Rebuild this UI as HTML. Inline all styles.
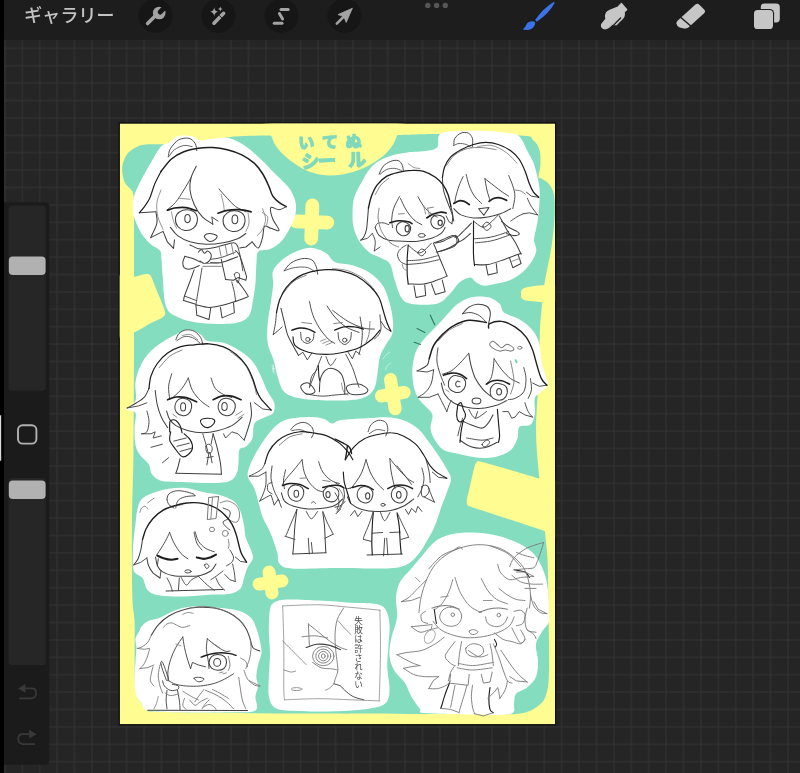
<!DOCTYPE html>
<html lang="ja">
<head>
<meta charset="utf-8">
<title>Procreate</title>
<style>
html,body{margin:0;padding:0;background:#252525;}
body{width:800px;height:773px;overflow:hidden;position:relative;font-family:"Liberation Sans","Noto Sans CJK JP",sans-serif;}
#stage{position:absolute;left:0;top:0;width:800px;height:773px;display:block;will-change:transform;}
#gallery{position:absolute;left:24px;top:3.4px;font-weight:500;will-change:transform;opacity:.999;font-size:18.3px;line-height:26px;color:#c4c4c4;letter-spacing:-0.2px;white-space:nowrap;}
</style>
</head>
<body>
<svg id="stage" width="800" height="773" viewBox="0 0 800 773">
  <defs>
    <pattern id="grid" x="4.9" y="13.5" width="17.4" height="17.4" patternUnits="userSpaceOnUse">
      <rect x="0" y="0" width="17.4" height="17.4" fill="#252525"/>
      <rect x="-0.6" y="0" width="1.2" height="17.4" fill="#313131"/>
      <rect x="16.8" y="0" width="1.2" height="17.4" fill="#313131"/>
      <rect x="0" y="-0.6" width="17.4" height="1.2" fill="#313131"/>
      <rect x="0" y="16.8" width="17.4" height="1.2" fill="#313131"/>
    </pattern>
    <filter id="soft" x="-5%" y="-5%" width="110%" height="110%"><feGaussianBlur stdDeviation="0.45"/></filter>
  </defs>
  <rect x="0" y="0" width="800" height="773" fill="url(#grid)"/>
  <!-- canvas shadow -->
  <rect x="118.6" y="122.4" width="437.6" height="603" fill="#0c0c0c"/>
<clipPath id="cv"><rect x="119.7" y="123.4" width="435.4" height="600.9"/></clipPath>
<g id="art" clip-path="url(#cv)">
<rect x="119.7" y="123.4" width="435.4" height="600.9" fill="#fffc92"/>
<path d="M143.5,144.7C148.3,144.0 155.2,144.4 163.0,144.2C170.8,144.0 181.3,144.2 190.0,143.5C198.7,142.8 207.5,141.2 215.0,140.0C222.5,138.8 226.2,137.2 235.0,136.5C243.8,135.8 257.2,135.7 268.0,135.5C278.8,135.3 279.0,135.6 300.0,135.5C321.0,135.4 370.7,135.2 394.0,135.0C417.3,134.8 418.8,133.9 440.0,134.0C461.2,134.1 505.5,134.5 521.0,135.5C536.5,136.5 529.9,137.6 533.0,140.0C536.1,142.4 538.3,145.8 539.5,150.0C540.7,154.2 540.5,160.6 540.4,165.0C540.2,169.4 538.4,174.2 538.6,176.5C538.8,178.8 539.8,177.2 541.5,178.5C543.2,179.8 547.0,181.4 549.0,184.0C551.0,186.6 552.8,189.3 553.8,194.0C554.8,198.7 554.8,206.0 554.7,212.0C554.7,218.0 554.1,223.7 553.5,230.0C552.9,236.3 552.1,243.3 551.0,250.0C549.9,256.7 548.2,263.8 547.0,270.0C545.8,276.2 544.9,280.3 544.0,287.0C543.1,293.7 542.2,302.8 541.5,310.0C540.8,317.2 540.5,318.3 540.0,330.0C539.5,341.7 539.2,363.3 538.5,380.0C537.8,396.7 536.0,415.0 536.0,430.0C536.0,445.0 537.5,458.3 538.5,470.0C539.5,481.7 540.9,489.7 542.0,500.0C543.1,510.3 544.1,522.0 545.0,532.0C545.9,542.0 546.9,547.0 547.5,560.0C548.1,573.0 548.2,591.3 548.5,610.0C548.8,628.7 549.4,657.8 549.0,672.0C548.6,686.2 547.8,689.3 546.0,695.0C544.2,700.7 542.3,702.9 538.0,706.0C533.7,709.1 529.7,712.2 520.0,713.5C510.3,714.8 516.7,714.0 480.0,714.0C443.3,714.0 353.3,713.8 300.0,713.5C246.7,713.2 185.3,712.8 160.0,712.0C134.7,711.2 151.5,711.0 148.0,709.0C144.5,707.0 141.2,704.0 139.0,700.0C136.8,696.0 135.7,693.3 135.0,685.0C134.3,676.7 134.7,660.8 134.6,650.0C134.5,639.2 134.9,629.2 134.5,620.0C134.1,610.8 132.7,611.7 132.3,595.0C131.9,578.3 131.8,544.2 132.0,520.0C132.2,495.8 133.2,478.3 133.5,450.0C133.8,421.7 133.9,378.3 134.0,350.0C134.1,321.7 134.0,302.5 134.0,280.0C134.0,257.5 134.1,229.2 134.0,215.0C133.9,200.8 134.0,199.2 133.5,195.0C133.0,190.8 132.4,191.8 131.0,189.7C129.6,187.6 126.2,185.4 124.8,182.5C123.3,179.6 122.6,175.1 122.3,172.0C122.0,168.9 122.0,166.7 122.8,163.8C123.6,160.9 125.0,157.1 126.9,154.5C128.8,151.9 131.4,149.9 134.2,148.3C137.0,146.7 138.7,145.4 143.5,144.7Z" fill="#85ddc0"/>
<path d="M266.0,123.5C244.2,125.6 269.8,132.5 271.3,136.0C272.8,139.5 273.1,141.4 275.0,144.4C276.9,147.4 279.4,150.7 282.5,153.8C285.6,156.9 289.4,160.1 293.8,163.1C298.2,166.1 303.5,169.6 308.8,171.6C314.1,173.6 320.0,174.8 325.6,175.3C331.2,175.8 336.9,175.3 342.5,174.4C348.1,173.5 354.1,171.7 359.4,169.7C364.7,167.7 370.0,164.8 374.4,162.2C378.8,159.5 382.5,156.8 385.6,153.8C388.7,150.8 391.2,147.4 393.1,144.4C395.0,141.4 395.4,139.5 396.9,136.0C398.4,132.5 423.8,125.6 402.0,123.5C380.2,121.4 287.8,121.4 266.0,123.5Z" fill="#fffc92"/>
<path d="M119.0,277.0C120.8,267.2 127.2,277.6 130.0,277.5C132.8,277.4 133.8,277.1 136.0,276.6C138.2,276.1 140.9,275.0 143.0,274.6C145.1,274.2 147.1,273.8 148.5,274.2C149.9,274.6 149.9,274.2 151.3,277.0C152.7,279.8 154.8,285.7 157.0,291.0C159.2,296.3 162.9,305.2 164.2,309.0C165.5,312.8 165.3,312.1 165.0,313.5C164.7,314.9 165.0,315.8 162.5,317.5C160.0,319.2 154.8,321.0 150.0,323.5C145.2,326.0 139.2,330.4 134.0,332.5C128.8,334.6 121.5,345.2 119.0,336.0C116.5,326.8 117.2,286.8 119.0,277.0Z" fill="#fffc92"/>
<path d="M476.5,462.6C477.4,461.6 475.6,460.9 479.5,461.6C483.4,462.3 490.1,464.2 500.0,467.0C509.9,469.8 529.7,475.9 539.2,478.6C548.7,481.3 554.0,473.6 557.0,483.0C560.0,492.4 559.1,527.0 557.0,535.0C554.9,543.0 552.1,533.5 544.3,530.9C536.5,528.3 522.2,523.6 510.0,519.6C497.8,515.6 478.1,509.3 471.0,506.8C463.9,504.3 468.1,505.5 467.4,504.4C466.7,503.3 466.5,503.1 466.9,500.0C467.3,496.9 468.8,491.4 470.0,486.0C471.2,480.6 473.2,471.4 474.3,467.5C475.4,463.6 475.6,463.6 476.5,462.6Z" fill="#fffc92"/>
<path d="M526.0,287.5C531.8,286.2 551.0,283.8 556.0,286.0C561.0,288.2 561.0,298.6 556.0,301.0C551.0,303.4 531.8,301.7 526.0,300.5C520.2,299.3 521.0,296.2 521.0,294.0C521.0,291.8 520.2,288.8 526.0,287.5Z" fill="#fffc92"/>
<g transform="rotate(2 311.8 222)" stroke="#fffc92" stroke-width="13.8" stroke-linecap="round" fill="none"><path d="M296.3,222.0 L327.3,222.0 M311.8,205.5 L311.8,238.5"/></g>
<g transform="rotate(-9 392.8 394.2)" stroke="#fffc92" stroke-width="13" stroke-linecap="round" fill="none"><path d="M381.3,394.2 L404.3,394.2 M392.8,379.4 L392.8,409.0"/></g>
<g transform="rotate(-8 270.5 582.5)" stroke="#fffc92" stroke-width="13" stroke-linecap="round" fill="none"><path d="M259.0,582.5 L282.0,582.5 M270.5,572.0 L270.5,593.0"/></g>
<path d="M161.0,146.6C164.1,143.2 166.5,144.1 169.3,142.4C172.1,140.7 173.8,137.2 177.6,136.2C181.4,135.2 188.2,135.5 192.0,136.2C195.8,136.9 196.9,139.9 200.4,140.3C203.9,140.7 208.0,139.0 212.8,138.7C217.6,138.4 223.9,137.0 229.4,138.3C234.9,139.6 240.4,142.8 245.9,146.6C251.4,150.4 257.7,156.5 262.5,161.0C267.3,165.5 271.4,170.0 274.9,173.5C278.4,177.0 280.9,179.2 283.5,182.0C286.1,184.8 288.5,186.7 290.5,190.0C292.5,193.3 294.7,198.1 295.5,202.0C296.3,205.9 296.3,209.3 295.5,213.5C294.7,217.7 292.8,222.5 290.5,227.0C288.2,231.5 285.4,236.8 282.0,240.5C278.6,244.2 274.2,247.2 270.3,249.0C266.4,250.8 260.8,249.3 258.5,251.5C256.2,253.7 257.0,256.6 256.5,262.0C256.0,267.4 256.0,277.2 255.4,283.8C254.8,290.4 253.8,296.1 252.8,301.3C251.8,306.6 251.6,311.8 249.3,315.3C247.0,318.8 244.1,320.9 238.8,322.3C233.6,323.8 225.1,324.0 217.8,324.0C210.5,324.0 201.7,323.5 195.0,322.3C188.3,321.1 182.3,319.6 177.5,317.0C172.7,314.4 168.5,313.5 166.0,306.5C163.5,299.5 163.4,283.1 162.6,275.0C161.8,266.9 161.8,262.1 161.4,258.0C161.0,253.9 161.7,252.8 160.0,250.5C158.3,248.2 153.9,247.0 151.0,244.5C148.1,242.0 145.0,238.6 142.8,235.5C140.6,232.4 139.1,229.2 137.6,226.0C136.1,222.8 134.6,218.9 133.8,216.0C133.1,213.1 133.1,212.0 133.1,208.7C133.1,205.4 132.9,200.7 134.1,196.2C135.3,191.7 137.5,187.2 140.3,181.7C143.1,176.2 147.2,168.9 150.7,163.1C154.1,157.2 157.9,150.0 161.0,146.6Z" fill="#ffffff"/>
<path d="M273.0,271.0C274.5,267.0 278.3,263.2 282.0,260.0C285.7,256.8 290.2,254.1 295.0,252.0C299.8,249.9 305.4,247.5 310.6,247.7C315.8,247.9 322.0,250.6 326.0,253.0C330.0,255.4 330.4,259.9 334.8,262.0C339.2,264.1 346.5,263.5 352.4,265.3C358.3,267.1 364.9,269.6 370.0,273.0C375.1,276.4 379.7,280.9 383.0,286.0C386.3,291.1 388.1,297.9 389.8,303.8C391.5,309.7 392.6,316.3 393.0,321.4C393.4,326.5 393.3,330.6 392.0,334.6C390.7,338.6 387.4,341.9 385.4,345.6C383.4,349.3 381.3,352.2 380.0,356.6C378.7,361.0 378.4,367.3 377.7,372.0C376.9,376.7 376.8,381.3 375.5,385.0C374.2,388.7 373.1,391.6 370.0,394.0C366.9,396.4 364.1,398.3 356.8,399.4C349.5,400.5 335.5,400.7 326.0,400.5C316.5,400.3 306.6,399.8 299.6,398.3C292.6,396.8 287.9,395.4 284.2,391.7C280.5,388.0 279.4,381.9 277.6,376.4C275.8,370.9 274.9,364.3 273.2,358.8C271.5,353.3 268.6,349.3 267.7,343.4C266.8,337.5 267.1,330.6 267.7,323.6C268.2,316.6 270.1,308.2 271.0,301.6C271.9,295.0 272.9,289.1 273.2,284.0C273.5,278.9 271.5,275.0 273.0,271.0Z" fill="#ffffff"/>
<path d="M354.3,197.0C355.9,191.8 359.8,185.5 362.3,180.9C364.8,176.3 366.6,172.7 369.4,169.4C372.2,166.1 375.1,163.4 379.0,161.0C382.9,158.6 387.9,156.6 392.7,155.2C397.5,153.8 401.9,153.1 407.6,152.4C413.3,151.7 422.0,151.7 427.0,150.8C432.0,149.9 434.9,149.9 437.4,146.9C439.9,143.9 435.5,135.7 441.9,133.0C448.2,130.3 465.0,130.8 475.5,130.7C486.0,130.6 497.8,131.6 505.0,132.5C512.2,133.4 515.3,133.2 519.0,136.2C522.7,139.2 524.9,146.2 527.3,150.7C529.7,155.2 531.8,158.5 533.5,163.0C535.2,167.5 536.6,172.8 537.6,177.6C538.6,182.4 539.5,186.1 539.7,192.0C539.9,197.9 539.2,207.0 538.7,212.8C538.2,218.6 537.3,222.5 536.5,227.0C535.7,231.5 534.0,236.1 534.0,240.0C534.0,243.9 536.8,246.9 536.3,250.7C535.8,254.4 533.4,258.8 531.0,262.5C528.6,266.2 525.7,269.7 522.0,272.7C518.3,275.7 513.7,278.6 509.0,280.5C504.3,282.4 497.9,283.4 493.6,284.3C489.3,285.2 486.0,286.0 483.0,285.6C480.0,285.2 477.7,283.1 475.5,281.7C473.3,280.3 472.7,277.4 470.0,277.5C467.3,277.6 462.8,279.8 459.4,282.5C456.0,285.2 453.5,290.4 449.7,294.0C445.9,297.6 443.2,302.2 436.7,303.8C430.2,305.4 416.8,304.9 410.9,303.8C405.0,302.7 403.9,301.3 401.2,297.3C398.5,293.3 396.6,285.6 394.7,280.0C392.8,274.4 392.3,267.7 390.0,264.0C387.7,260.3 384.4,259.9 381.0,258.0C377.6,256.1 373.0,255.3 369.4,252.5C365.8,249.7 361.8,245.2 359.1,241.0C356.5,236.8 354.6,231.8 353.5,227.0C352.4,222.2 352.5,217.0 352.6,212.0C352.7,207.0 352.7,202.2 354.3,197.0Z" fill="#ffffff"/>
<path d="M175.9,334.5C180.4,332.2 184.2,329.3 188.3,329.3C192.4,329.3 197.6,332.6 200.7,334.5C203.8,336.4 203.2,339.3 207.0,340.7C210.8,342.1 218.0,341.1 223.5,342.8C229.0,344.5 235.2,347.9 240.0,351.0C244.8,354.1 249.0,357.2 252.5,361.4C256.0,365.5 258.4,371.1 260.8,375.9C263.2,380.7 264.8,385.9 267.0,390.4C269.2,394.9 273.2,399.0 274.2,402.8C275.2,406.6 274.7,410.7 273.2,413.1C271.7,415.5 268.1,415.6 265.0,417.3C261.9,419.0 256.6,420.1 254.5,423.5C252.4,426.9 253.9,434.2 252.5,438.0C251.1,441.8 248.2,444.6 246.0,446.5C243.8,448.4 240.7,447.1 239.5,449.5C238.3,451.9 238.9,457.1 238.6,460.7C238.3,464.3 238.5,467.9 237.5,471.0C236.5,474.1 235.2,477.3 232.7,479.2C230.2,481.1 227.6,482.0 222.6,482.6C217.6,483.2 209.5,483.1 202.8,483.0C196.1,482.9 189.1,482.3 182.3,482.0C175.5,481.7 167.1,482.3 162.0,481.0C156.9,479.7 154.2,477.0 152.0,474.2C149.8,471.4 150.6,467.2 148.6,464.0C146.6,460.8 142.2,458.2 140.0,455.0C137.8,451.8 136.4,449.6 135.5,445.0C134.6,440.4 134.5,432.9 134.5,427.6C134.5,422.3 136.9,416.2 135.5,413.1C134.1,410.0 126.2,411.1 126.2,409.0C126.2,406.9 133.9,405.2 135.5,400.7C137.1,396.2 134.6,387.9 135.5,382.0C136.4,376.1 138.4,370.3 140.7,365.5C142.9,360.7 145.6,356.8 149.0,353.0C152.4,349.2 156.9,345.9 161.4,342.8C165.9,339.7 171.4,336.8 175.9,334.5Z" fill="#ffffff"/>
<path d="M287.6,419.3C293.4,417.7 303.9,417.1 310.0,417.0C316.1,416.9 320.3,417.9 324.0,419.0C327.7,420.1 329.2,423.3 332.0,423.5C334.8,423.7 335.3,420.9 341.0,420.0C346.7,419.1 358.4,418.8 366.0,418.3C373.6,417.8 380.5,416.9 386.7,417.2C392.9,417.5 398.1,418.4 403.3,420.3C408.5,422.2 413.7,425.2 417.8,428.6C421.9,432.1 424.7,436.5 428.1,441.0C431.6,445.5 435.4,450.8 438.5,455.5C441.6,460.2 444.6,465.1 446.7,469.0C448.8,472.9 450.9,475.0 451.0,478.8C451.1,482.6 448.6,487.5 447.0,492.0C445.4,496.5 443.2,501.5 441.7,505.7C440.2,509.9 439.4,513.0 438.0,517.0C436.6,521.0 435.0,525.8 433.0,530.0C431.0,534.2 428.5,538.3 426.0,542.5C423.5,546.7 421.2,551.2 417.8,555.0C414.4,558.8 410.6,563.0 405.4,565.2C400.2,567.4 397.6,567.9 386.7,568.4C375.8,568.9 355.8,568.0 340.0,568.0C324.2,568.0 301.8,569.2 291.7,568.4C281.6,567.6 281.7,565.8 279.3,563.2C276.9,560.6 278.7,557.6 277.3,552.8C275.9,548.0 273.4,540.1 271.0,534.2C268.6,528.3 264.9,522.8 262.8,517.6C260.7,512.4 260.0,507.8 258.6,503.0C257.2,498.2 256.2,492.8 254.5,488.7C252.8,484.6 249.3,481.4 248.3,478.3C247.3,475.2 247.3,473.8 248.3,470.0C249.3,466.2 251.8,460.7 254.5,455.5C257.2,450.3 261.4,443.8 264.8,439.0C268.2,434.2 271.4,429.9 275.2,426.6C279.0,423.3 281.8,420.9 287.6,419.3Z" fill="#ffffff"/>
<path d="M141.6,499.3C144.2,496.5 148.5,494.9 153.0,493.1C157.5,491.4 163.2,489.7 168.8,488.8C174.4,487.9 180.5,487.3 186.3,487.9C192.1,488.5 198.3,491.1 203.8,492.3C209.3,493.5 214.6,493.4 219.5,494.9C224.4,496.3 230.0,498.2 233.5,501.0C237.0,503.8 238.8,507.4 240.5,511.5C242.2,515.6 243.1,521.1 244.0,525.5C244.9,529.9 244.6,533.7 245.8,537.8C247.0,541.9 249.8,546.5 251.0,550.0C252.2,553.5 253.4,555.9 252.8,558.8C252.2,561.7 249.0,564.3 247.5,567.5C246.0,570.7 245.2,574.5 244.0,578.0C242.8,581.5 242.8,585.9 240.5,588.5C238.2,591.1 234.7,592.8 230.0,593.8C225.3,594.8 219.8,594.2 212.5,594.6C205.2,595.0 195.1,596.2 186.3,596.4C177.6,596.5 166.4,596.5 160.0,595.5C153.6,594.5 150.7,593.2 147.8,590.3C144.9,587.4 144.8,581.2 142.5,578.0C140.2,574.8 135.4,575.1 133.8,571.0C132.2,566.9 132.9,559.0 132.9,553.5C132.9,548.0 133.4,542.8 133.8,537.8C134.2,532.8 134.9,528.5 135.5,523.8C136.1,519.1 136.3,513.9 137.3,509.8C138.3,505.7 139.0,502.1 141.6,499.3Z" fill="#ffffff"/>
<path d="M141.6,626.5C143.1,624.8 144.7,622.8 147.8,621.3C150.9,619.8 155.9,619.4 160.0,617.8C164.1,616.2 167.9,613.4 172.3,611.6C176.7,609.9 181.1,608.2 186.3,607.3C191.6,606.4 198.0,606.3 203.8,606.4C209.6,606.5 215.5,607.4 221.3,608.1C227.1,608.8 233.9,609.2 238.8,610.8C243.8,612.4 248.1,614.9 251.0,617.8C253.9,620.7 254.8,624.5 256.3,628.3C257.8,632.1 258.9,636.4 259.8,640.5C260.7,644.6 261.8,648.7 261.5,652.8C261.2,656.9 258.9,660.9 258.0,665.0C257.1,669.1 256.3,673.8 256.3,677.3C256.3,680.8 258.1,682.8 258.0,686.0C257.9,689.2 255.8,692.4 255.4,696.5C255.0,700.6 259.6,707.9 255.4,710.5C251.2,713.1 243.0,712.0 230.0,712.3C217.0,712.6 191.2,712.6 177.5,712.3C163.8,712.0 153.8,712.0 147.8,710.5C141.8,709.0 143.7,706.4 141.6,703.5C139.5,700.6 136.7,697.7 135.5,693.0C134.3,688.3 134.6,680.8 134.6,675.5C134.6,670.2 135.2,666.2 135.5,661.5C135.8,656.8 136.4,651.3 136.4,647.5C136.4,643.7 135.1,641.4 135.5,638.8C135.9,636.2 138.0,633.8 139.0,631.8C140.0,629.8 140.1,628.2 141.6,626.5Z" fill="#ffffff"/>
<path d="M270.0,609.0C271.2,603.8 273.1,603.2 276.3,601.6C279.5,600.0 282.1,599.7 289.2,599.5C296.3,599.3 308.7,600.1 319.0,600.6C329.3,601.1 341.8,602.2 351.0,602.7C360.2,603.2 368.8,602.8 374.5,603.8C380.2,604.8 382.7,605.6 385.2,609.0C387.7,612.4 389.0,617.9 389.5,624.0C390.0,630.1 388.8,638.3 388.4,645.4C388.0,652.5 387.1,659.6 387.3,666.7C387.5,673.8 389.5,682.3 389.5,688.0C389.5,693.7 389.4,697.7 387.3,700.9C385.2,704.1 382.8,705.7 376.7,707.3C370.6,708.9 360.6,709.8 351.0,710.5C341.4,711.2 329.7,711.5 319.0,711.5C308.3,711.5 294.5,711.2 287.0,710.5C279.5,709.8 277.2,709.6 274.2,707.3C271.2,705.0 269.8,701.9 268.9,696.6C268.0,691.3 268.7,682.4 268.9,675.3C269.1,668.2 270.0,661.1 270.0,654.0C270.0,646.9 268.9,640.1 268.9,632.6C268.9,625.1 268.8,614.2 270.0,609.0Z" fill="#ffffff"/>
<path d="M396.0,597.0C396.5,591.1 397.5,586.7 400.0,582.0C402.5,577.3 407.3,573.3 411.0,569.0C414.7,564.7 418.0,560.6 422.0,556.0C426.0,551.4 430.2,545.1 435.0,541.5C439.8,537.9 444.4,536.0 450.6,534.5C456.9,533.0 465.2,532.4 472.5,532.5C479.8,532.6 487.8,533.7 494.4,535.0C501.0,536.3 506.7,538.4 512.0,540.5C517.3,542.6 521.8,544.6 526.0,547.5C530.2,550.4 533.8,553.4 537.0,558.0C540.2,562.6 543.2,569.5 545.0,575.0C546.8,580.5 547.3,584.8 548.0,591.0C548.7,597.2 548.8,606.8 549.0,612.0C549.2,617.2 550.1,618.8 549.0,622.0C547.9,625.2 544.7,627.3 542.5,631.0C540.3,634.7 536.8,639.0 536.0,644.0C535.2,649.0 538.0,655.5 538.0,661.0C538.0,666.5 537.8,672.6 536.0,677.0C534.2,681.4 530.3,684.7 527.0,687.5C523.7,690.3 518.2,691.4 516.0,694.0C513.8,696.6 515.0,699.7 514.0,703.0C513.0,706.3 517.3,712.1 510.0,714.0C502.7,715.9 484.3,714.7 470.0,714.5C455.7,714.3 432.3,713.9 424.0,713.0C415.7,712.1 422.2,711.8 420.0,709.0C417.8,706.2 413.5,700.3 411.0,696.0C408.5,691.7 407.8,687.3 405.0,683.0C402.2,678.7 396.6,674.7 394.0,670.0C391.4,665.3 389.8,660.5 389.4,655.0C389.0,649.5 390.3,643.2 391.6,637.0C392.9,630.8 396.3,624.2 397.0,617.5C397.7,610.8 395.5,602.9 396.0,597.0Z" fill="#ffffff"/>
<path d="M449.0,312.6C452.5,308.9 454.1,306.4 457.8,303.8C461.5,301.2 465.9,298.3 471.0,297.2C476.1,296.1 483.8,296.1 488.6,297.2C493.4,298.3 497.0,301.2 499.6,303.8C502.2,306.4 500.7,310.0 504.0,312.6C507.3,315.2 514.6,316.3 519.4,319.2C524.2,322.1 529.3,326.2 532.6,330.2C535.9,334.2 537.7,338.3 539.2,343.4C540.7,348.5 540.3,355.5 541.4,361.0C542.5,366.5 544.7,372.4 545.8,376.4C546.9,380.4 548.7,382.6 548.0,385.2C547.3,387.8 543.6,389.6 541.4,391.8C539.2,394.0 535.9,394.7 534.8,398.4C533.7,402.1 535.5,409.4 534.8,413.8C534.1,418.2 533.0,422.6 530.4,424.8C527.8,427.0 521.6,424.7 519.4,427.0C517.2,429.3 518.9,434.5 517.4,438.4C515.9,442.3 514.2,447.1 510.6,450.2C507.0,453.3 500.8,455.6 495.5,456.9C490.2,458.1 485.1,458.3 478.7,457.7C472.2,457.1 462.8,454.9 456.8,453.5C450.8,452.1 446.7,452.1 442.8,449.5C438.9,446.9 435.8,441.6 433.7,438.0C431.6,434.4 430.7,431.5 430.5,427.6C430.3,423.7 433.4,418.4 432.4,414.7C431.4,411.0 427.1,408.4 424.7,405.6C422.3,402.8 419.9,400.7 418.2,397.9C416.5,395.1 415.3,392.5 414.3,388.8C413.3,385.1 412.6,380.2 412.4,375.9C412.2,371.6 412.3,367.3 413.0,363.0C413.7,358.7 414.5,354.2 416.5,350.0C418.5,345.8 421.6,342.0 425.0,338.0C428.4,334.0 433.0,330.0 437.0,325.8C441.0,321.6 445.5,316.3 449.0,312.6Z" fill="#ffffff"/>
<g fill="none" stroke="#404040" stroke-width="0.92" stroke-linecap="round" stroke-linejoin="round"><path d="M168.3,156.9C168.6,155.5 168.6,151.5 170.4,148.6C172.1,145.8 175.5,141.7 178.6,139.9C181.7,138.2 186.2,137.7 189.0,138.3C191.8,138.9 193.9,141.4 195.2,143.5C196.5,145.5 196.4,149.5 196.7,150.7"/><path d="M212.8,224.2L211.8,216.9L218.0,221.1"/><path d="M191.1,177.6C189.9,179.7 186.4,185.9 183.8,190.0C181.2,194.2 178.3,199.2 175.5,202.4C172.8,205.7 168.6,208.5 167.3,209.7"/><path d="M219.0,189.0C220.4,190.5 224.5,195.4 227.3,198.3C230.0,201.2 232.5,204.3 235.6,206.6C238.7,208.8 244.2,210.9 245.9,211.8"/><path d="M237.6,245.9C238.2,248.0 239.9,254.2 240.7,258.3C241.6,262.5 242.5,268.7 242.8,270.8"/><path d="M184.5,296.0L195.9,300.4"/><path d="M202.0,268.0C201.6,270.6 200.3,278.5 199.4,283.8C198.5,289.0 197.3,296.0 196.8,299.5C196.2,303.0 196.0,303.9 195.9,304.8"/><path d="M231.8,282.0C232.2,283.8 233.7,289.3 234.4,292.5C235.0,295.7 235.4,299.8 235.6,301.3"/><path d="M234.4,274.1C234.7,273.3 236.1,272.2 237.0,272.4C237.9,272.5 239.5,273.3 239.6,275.0C239.8,276.8 238.6,282.4 237.9,282.9C237.1,283.3 235.8,279.1 235.3,277.6C234.7,276.2 234.1,275.0 234.4,274.1Z"/><path d="M210.8,259.3C212.5,259.0 217.2,258.7 221.3,257.5C225.3,256.3 232.9,253.1 235.3,252.3"/><path d="M379.1,174.3C379.8,173.0 381.0,168.7 383.0,166.5C384.9,164.3 388.2,162.2 390.8,161.3C393.3,160.3 396.6,160.0 398.5,160.7C400.5,161.4 401.6,163.7 402.4,165.5C403.2,167.3 403.2,170.4 403.4,171.3"/><path d="M360.7,240.2L367.5,238.3L372.3,233.4"/><path d="M372.3,233.4C372.8,234.7 374.9,238.3 375.2,241.2C375.6,244.1 374.4,249.3 374.3,250.9"/><path d="M374.3,250.9L380.1,247.0"/><path d="M399.5,196.6C398.5,198.5 395.0,204.3 393.7,208.2C392.4,212.1 391.9,216.6 391.7,219.9C391.6,223.1 392.5,226.3 392.7,227.6"/><path d="M400.5,198.5C401.4,200.5 404.0,206.6 406.3,210.2C408.5,213.7 411.5,217.4 414.0,219.9C416.6,222.3 420.5,223.9 421.8,224.7"/><path d="M417.9,196.6C418.9,198.2 421.5,203.4 423.7,206.3C426.0,209.2 429.2,212.3 431.5,214.0C433.8,215.8 436.4,216.5 437.3,217.0"/><path d="M451.9,223.7L449.0,221.8L446.1,216.0"/><path d="M375.2,227.6C375.6,227.0 375.9,224.6 377.2,223.7C378.5,222.9 381.0,222.6 383.0,222.8C384.9,222.9 387.8,224.4 388.8,224.7"/><ellipse cx="421.8" cy="235.4" rx="3.5" ry="1.9"/><path d="M408.2,245.1C410.2,246.4 416.0,253.2 419.9,252.9C423.7,252.5 429.6,244.8 431.5,243.1"/><path d="M417.9,252.9C417.9,251.7 420.5,249.1 421.8,249.0C423.1,248.8 425.7,250.8 425.7,251.9C425.7,253.0 423.1,255.6 421.8,255.8C420.5,255.9 417.9,254.0 417.9,252.9Z"/><path d="M406.3,245.1C405.3,245.7 401.9,247.4 400.5,249.0C399.0,250.6 397.5,252.7 397.5,254.8C397.5,256.9 399.0,260.0 400.5,261.6C401.9,263.2 405.3,264.0 406.3,264.5"/><path d="M407.2,260.6C409.7,260.5 416.8,260.5 421.8,259.6C426.8,258.8 434.7,256.4 437.3,255.8"/><path d="M407.2,264.5C410.0,264.2 418.4,263.8 423.7,262.9C429.1,262.1 436.7,260.2 439.3,259.6"/><path d="M453.8,145.5C454.0,144.3 453.6,140.3 454.8,138.3C456.0,136.2 458.8,134.0 461.0,133.1C463.3,132.2 466.4,132.2 468.3,133.1C470.2,134.0 471.7,136.0 472.4,138.3C473.1,140.5 472.4,145.2 472.4,146.6"/><path d="M538.7,197.3L531.4,196.2L526.3,192.1"/><path d="M527.3,198.3C528.0,199.7 529.7,203.8 531.4,206.6C533.2,209.3 536.6,213.5 537.6,214.9"/><path d="M537.6,214.9L529.4,212.8L523.1,213.8"/><path d="M523.1,213.8C522.1,214.4 519.0,215.7 516.9,216.9C514.9,218.1 511.8,220.4 510.7,221.1"/><path d="M508.7,175.5C509.3,177.3 511.8,182.4 512.8,185.9C513.8,189.3 514.9,192.4 514.9,196.2C514.9,200.0 513.1,206.6 512.8,208.7"/><path d="M466.2,174.5C466.7,176.4 467.9,182.3 469.3,185.9C470.7,189.5 472.4,193.3 474.5,196.2C476.6,199.2 480.5,202.3 481.7,203.5"/><path d="M484.9,178.6C485.2,180.5 486.1,186.4 486.9,190.0C487.8,193.7 489.5,198.7 490.0,200.4"/><path d="M484.9,178.6C486.4,179.9 491.2,183.6 494.2,185.9C497.1,188.1 500.0,190.4 502.4,192.1C504.9,193.8 507.6,195.5 508.7,196.2"/><path d="M463.1,176.6C462.4,178.1 460.2,182.6 459.0,185.9C457.8,189.2 456.6,193.5 455.9,196.2C455.2,199.0 455.0,201.4 454.8,202.4"/><path d="M473.5,221.1C475.0,222.1 480.0,226.9 482.8,227.3C485.5,227.6 487.4,225.2 490.0,223.1C492.6,221.1 496.9,216.2 498.3,214.9"/><path d="M482.8,226.3C482.8,224.9 485.5,222.1 486.9,222.1C488.3,222.1 491.1,224.9 491.1,226.3C491.1,227.6 488.3,230.4 486.9,230.4C485.5,230.4 482.8,227.6 482.8,226.3Z"/><path d="M474.5,238.7C476.7,238.5 483.6,238.3 488.0,237.6C492.3,236.9 496.9,235.6 500.4,234.5C503.8,233.5 507.3,231.9 508.7,231.4"/><path d="M475.5,242.8C478.3,242.5 486.2,242.1 492.1,240.7C498.0,239.4 507.6,235.6 510.7,234.5"/><path d="M284.2,270.8C285.3,269.5 287.9,265.1 290.8,263.1C293.7,261.1 298.3,259.2 301.8,258.7C305.3,258.1 309.3,258.5 311.7,259.8C314.1,261.1 315.1,264.0 316.1,266.4C317.1,268.8 317.4,272.8 317.6,274.1"/><path d="M390.9,331.3L385.4,328.0L381.0,321.4"/><path d="M379.9,314.8C380.0,317.0 381.1,324.7 381.0,328.0C380.8,331.3 379.9,332.7 378.8,334.6C377.7,336.4 375.1,338.2 374.4,339.0"/><path d="M276.5,312.6C276.3,314.4 275.9,319.9 275.4,323.6C274.8,327.2 273.6,332.7 273.2,334.6"/><path d="M273.2,334.6L278.7,330.2L282.0,326.9"/><path d="M309.5,301.6C310.0,303.8 311.1,310.4 312.8,314.8C314.4,319.2 316.8,323.9 319.4,328.0C321.9,332.0 325.6,336.4 328.2,339.0C330.7,341.5 333.7,342.6 334.8,343.4"/><path d="M327.1,306.0C328.4,307.8 331.7,313.5 334.8,317.0C337.9,320.5 341.7,324.3 345.8,326.9C349.8,329.4 356.8,331.5 359.0,332.4"/><path d="M332.6,310.4C335.1,312.2 342.8,318.4 348.0,321.4C353.1,324.3 359.0,326.7 363.4,328.0C367.8,329.3 372.5,328.9 374.4,329.1"/><path d="M360.1,317.0C360.4,319.5 362.1,327.6 362.3,332.4C362.4,337.1 361.7,341.9 361.2,345.6C360.6,349.2 359.3,352.9 359.0,354.4"/><path d="M300.7,332.4C300.9,333.7 300.7,338.2 301.8,340.1C302.9,341.9 305.5,343.4 307.3,343.4C309.1,343.4 311.7,341.7 312.8,340.1C313.9,338.4 313.7,334.6 313.9,333.5"/><ellipse cx="307.9" cy="339.4" rx="2.2" ry="2.0"/><path d="M338.1,332.4C338.3,333.7 338.1,338.0 339.2,340.1C340.3,342.1 342.8,344.5 344.7,344.5C346.5,344.5 349.1,342.1 350.2,340.1C351.3,338.0 351.1,333.7 351.3,332.4"/><ellipse cx="344.7" cy="340.1" rx="2.2" ry="2.0"/><path d="M298.5,355.5L302.9,352.2L307.3,359.9L311.7,353.3"/><path d="M348.0,352.2L352.4,358.8L355.7,351.1L360.1,354.4"/><path d="M321.6,356.6C320.8,358.4 318.6,363.9 317.2,367.6C315.7,371.2 314.1,375.3 312.8,378.6C311.5,381.9 310.0,385.9 309.5,387.3"/><path d="M326.0,356.6C326.7,358.0 328.7,365.0 330.4,365.4C332.0,365.7 335.0,359.9 335.9,358.8"/><path d="M345.8,354.4C346.9,356.6 350.5,363.2 352.4,367.6C354.2,372.0 355.7,377.5 356.8,380.8C357.9,384.1 358.6,386.3 359.0,387.3"/><path d="M309.5,387.3C309.8,385.5 310.4,379.3 311.7,376.4C313.0,373.4 316.3,370.9 317.2,369.8"/><path d="M306.2,393.9C308.8,394.3 316.8,396.0 321.6,396.1C326.3,396.3 330.4,395.4 334.8,395.0C339.2,394.7 345.8,394.1 348.0,393.9"/><path d="M175.9,339.7C176.4,338.6 177.3,335.1 179.0,333.5C180.7,331.8 183.7,330.3 186.2,329.9C188.8,329.6 192.1,330.1 194.5,331.4C196.9,332.7 199.3,335.4 200.7,337.6C202.1,339.8 202.5,343.6 202.8,344.8"/><path d="M271.1,410.0L262.8,409.0L254.5,402.8"/><path d="M244.2,440.1L238.0,433.8L231.8,431.8L225.6,438.0L223.5,433.8"/><path d="M127.2,408.0L138.6,405.9L146.9,402.8"/><path d="M146.9,411.1C147.3,412.8 149.0,418.0 149.0,421.4C149.0,424.9 148.1,429.7 146.9,431.8C145.7,433.8 142.6,433.5 141.7,433.8"/><path d="M141.7,433.8L151.0,433.8L155.2,431.8L153.1,438.0L161.4,435.9"/><path d="M188.3,378.0C187.3,379.7 184.5,385.2 182.1,388.3C179.7,391.4 176.2,394.7 173.8,396.6C171.4,398.5 168.6,399.2 167.6,399.7"/><path d="M188.3,378.0C189.0,380.0 190.4,386.6 192.4,390.4C194.5,394.2 198.0,398.0 200.7,400.7C203.5,403.5 207.6,405.9 209.0,406.9"/><path d="M211.1,378.0C211.8,379.7 213.1,385.5 215.2,388.3C217.3,391.1 220.7,393.0 223.5,394.5C226.3,396.1 230.4,397.1 231.8,397.6"/><path d="M171.7,373.8C171.2,375.9 169.0,382.1 168.6,386.2C168.3,390.4 169.5,396.6 169.7,398.7"/><path d="M173.8,441.1L186.2,438.0"/><path d="M176.9,446.3L189.3,443.2"/><path d="M180.0,451.4L191.4,448.3"/><path d="M202.8,433.8C203.3,435.6 205.0,441.1 205.9,444.2C206.8,447.3 207.6,451.1 208.0,452.5"/><path d="M213.1,433.8L211.1,444.2"/><path d="M205.9,446.3C206.2,444.9 208.0,444.0 209.0,444.2C210.0,444.4 211.8,445.9 212.1,447.3C212.5,448.7 211.9,451.6 211.1,452.5C210.2,453.3 207.8,453.5 206.9,452.5C206.1,451.4 205.6,447.6 205.9,446.3Z"/><path d="M209.0,452.5L206.9,464.9"/><path d="M210.0,452.5L212.1,462.8"/><path d="M206.9,457.7L213.1,456.6"/><path d="M151.0,447.3L162.4,444.2"/><path d="M162.4,462.8L168.6,457.7"/><path d="M290.7,429.7C291.6,428.8 293.6,425.7 295.9,424.5C298.1,423.3 301.6,422.1 304.2,422.4C306.8,422.8 309.9,424.8 311.4,426.6C313.0,428.3 313.5,430.9 313.5,432.8C313.5,434.7 311.8,437.1 311.4,437.9"/><path d="M264.8,463.8C264.1,464.9 263.3,468.0 260.7,470.0C258.1,472.1 251.2,475.2 249.3,476.2"/><path d="M249.3,476.2L258.6,476.2L265.9,472.1"/><path d="M265.9,472.1C265.9,474.2 266.4,480.7 265.9,484.5C265.4,488.3 263.8,492.1 262.8,494.9C261.7,497.6 260.2,500.0 259.7,501.1"/><path d="M259.7,501.1L266.9,496.9L271.0,494.9L273.1,501.1L274.2,505.2L278.3,499.0L281.4,507.3"/><path d="M272.1,465.9C271.9,468.0 270.7,474.2 271.0,478.3C271.4,482.4 272.8,486.9 274.2,490.7C275.5,494.5 278.5,499.4 279.3,501.1"/><path d="M272.1,482.4C271.4,482.8 268.6,483.1 267.9,484.5C267.3,485.9 267.3,489.2 267.9,490.7C268.6,492.3 271.4,493.3 272.1,493.8"/><path d="M302.1,459.7C300.7,461.4 296.4,466.9 293.8,470.0C291.2,473.1 288.5,475.9 286.6,478.3C284.7,480.7 283.1,483.5 282.4,484.5"/><path d="M302.1,459.7C302.4,461.7 303.0,468.3 304.2,472.1C305.4,475.9 307.3,479.5 309.3,482.4C311.4,485.4 314.3,488.1 316.6,489.7C318.8,491.2 321.8,491.4 322.8,491.8"/><path d="M318.7,461.7C319.3,463.5 320.7,469.0 322.8,472.1C324.9,475.2 328.3,478.5 331.1,480.4C333.8,482.3 338.0,483.0 339.4,483.5"/><path d="M285.5,470.0C285.2,471.8 283.6,477.3 283.5,480.4C283.3,483.5 284.3,487.3 284.5,488.7"/><path d="M311.4,503.1C311.8,502.9 312.8,501.6 313.5,501.7C314.2,501.8 315.2,503.3 315.6,503.6"/><path d="M343.5,488.7C343.7,490.0 344.9,494.2 344.5,496.9C344.2,499.7 342.6,502.8 341.4,505.2C340.2,507.6 338.0,510.4 337.3,511.4"/><path d="M336.3,513.5L340.4,509.4"/><path d="M306.2,511.4C307.1,512.6 309.5,518.7 311.4,518.7C313.3,518.7 316.6,512.6 317.6,511.4"/><path d="M296.9,509.4C296.1,511.4 293.5,517.6 291.7,521.8C290.0,525.9 287.7,531.8 286.6,534.2C285.5,536.6 285.4,535.9 285.1,536.3"/><path d="M285.1,536.3L294.9,539.4"/><path d="M322.8,511.4C323.5,513.2 325.4,518.3 326.9,521.8C328.5,525.2 331.1,530.1 332.1,532.1C333.1,534.2 333.0,533.9 333.1,534.2"/><path d="M333.1,534.2L324.9,538.3"/><path d="M308.3,538.3L309.3,553.9"/><path d="M311.4,542.5L312.4,552.8"/><path d="M368.1,431.7C368.6,430.5 369.5,426.4 371.2,424.5C372.9,422.6 376.1,420.7 378.5,420.3C380.9,420.0 384.2,420.9 385.7,422.4C387.3,424.0 387.8,427.4 387.8,429.7C387.8,431.9 386.1,434.8 385.7,435.9"/><path d="M446.8,478.3L438.5,477.3L432.3,472.1"/><path d="M426.1,459.7C426.6,461.7 428.5,468.3 429.2,472.1C429.9,475.9 430.0,480.7 430.2,482.4"/><path d="M428.1,486.6C428.7,488.0 430.2,492.3 431.3,494.9C432.3,497.5 433.8,500.9 434.4,502.1"/><path d="M434.4,502.1L428.1,499.0L424.0,496.9"/><path d="M421.9,486.6C422.8,484.9 425.9,484.9 427.1,485.6C428.3,486.2 429.4,489.0 429.2,490.7C429.0,492.5 427.3,495.0 426.1,495.9C424.9,496.8 422.6,497.5 421.9,495.9C421.2,494.4 421.1,488.3 421.9,486.6Z"/><path d="M366.0,459.7C366.7,461.7 368.5,468.3 370.2,472.1C371.9,475.9 374.2,479.5 376.4,482.4C378.6,485.4 382.4,488.5 383.6,489.7"/><path d="M366.0,459.7C365.4,461.7 363.6,468.3 361.9,472.1C360.2,475.9 357.6,479.7 355.7,482.4C353.8,485.2 351.4,487.6 350.5,488.7"/><path d="M389.9,458.6C390.0,460.5 390.4,466.4 390.9,470.0C391.4,473.7 392.3,477.3 393.0,480.4C393.6,483.5 394.7,487.3 395.0,488.7"/><path d="M389.9,458.6C391.4,460.5 396.2,466.8 399.2,470.0C402.1,473.3 405.0,476.2 407.4,478.3C409.9,480.4 412.6,481.8 413.7,482.4"/><path d="M397.1,465.9C398.5,467.6 403.0,473.1 405.4,476.2C407.8,479.3 410.6,483.1 411.6,484.5"/><path d="M421.9,468.0C422.3,469.7 424.0,474.9 424.0,478.3C424.0,481.8 423.0,485.6 421.9,488.7C420.9,491.8 418.5,495.6 417.8,496.9"/><ellipse cx="383.0" cy="504.8" rx="2.1" ry="1.4"/><path d="M350.5,515.6L354.7,510.4L357.8,516.6L361.9,511.4"/><path d="M405.4,509.4L408.5,514.5L411.6,508.3L415.7,512.5L417.8,506.3L421.9,511.4"/><path d="M335.0,482.4C336.0,483.1 339.1,485.6 341.2,486.6C343.3,487.6 345.3,488.7 347.4,488.7C349.5,488.7 352.6,486.9 353.6,486.6"/><path d="M335.0,492.8C335.7,494.2 338.8,498.3 339.1,501.1C339.5,503.8 337.4,508.0 337.1,509.4"/><path d="M335.0,507.3C336.0,506.9 339.5,506.3 341.2,505.2C342.9,504.2 344.7,501.8 345.3,501.1"/><path d="M380.5,512.5C381.2,513.8 383.1,520.7 384.7,520.7C386.2,520.7 389.0,513.8 389.9,512.5"/><path d="M373.3,511.4C372.6,513.5 370.7,519.7 369.2,523.8C367.6,528.0 364.9,533.7 364.0,536.3C363.0,538.9 363.6,538.9 363.6,539.4"/><path d="M363.6,539.4L371.2,541.4"/><path d="M397.1,512.5C398.0,514.4 400.5,520.2 402.3,523.8C404.0,527.5 406.4,532.0 407.4,534.2C408.5,536.4 408.3,536.8 408.5,537.3"/><path d="M408.5,537.3L401.2,539.4"/><path d="M372.3,533.2L382.6,532.5"/><path d="M389.9,532.5L400.2,532.1"/><path d="M384.7,538.3L383.6,555.9"/><path d="M386.7,538.3L387.8,554.9"/><path d="M167.0,499.3C167.3,498.4 167.3,495.4 168.8,494.0C170.2,492.6 173.1,491.3 175.8,490.9C178.4,490.4 181.6,490.9 184.5,491.4C187.4,491.9 191.5,493.3 193.3,494.0C195.0,494.7 194.7,495.5 195.0,495.8"/><path d="M195.0,495.8C193.5,495.9 188.9,496.0 186.3,496.6C183.6,497.2 180.9,498.1 179.3,499.3C177.6,500.4 177.2,502.2 176.6,503.6C176.0,505.1 175.9,507.3 175.8,508.0"/><path d="M167.0,499.3C167.3,500.1 167.6,503.0 168.8,504.5C169.9,506.0 173.1,507.4 174.0,508.0"/><path d="M246.6,562.3L240.5,561.4L235.3,557.0"/><path d="M230.0,550.0C230.6,551.2 233.2,555.0 233.5,557.0C233.8,559.0 232.9,560.8 231.8,562.3C230.6,563.7 227.4,565.2 226.5,565.8"/><path d="M232.6,564.0C232.9,565.5 233.9,569.8 234.4,572.8C234.8,575.7 235.1,580.0 235.3,581.5"/><path d="M235.3,581.5L230.0,579.8L224.8,574.5"/><path d="M223.0,571.0C221.8,571.9 218.0,574.8 216.0,576.3C214.0,577.7 211.6,579.2 210.8,579.8"/><path d="M133.8,564.9L140.8,562.3L146.9,557.9"/><path d="M160.0,578.0L160.9,571.0"/><path d="M169.6,532.5C168.9,534.0 166.9,538.3 165.3,541.3C163.6,544.2 161.5,547.7 160.0,550.0C158.5,552.3 157.1,554.4 156.5,555.3"/><path d="M169.6,532.5C170.4,534.3 172.1,539.5 174.0,543.0C175.9,546.5 178.7,550.9 181.0,553.5C183.3,556.1 186.8,557.9 188.0,558.8"/><path d="M195.0,531.6C195.6,533.2 196.8,538.5 198.5,541.3C200.3,544.0 202.9,546.5 205.5,548.3C208.1,550.0 212.8,551.2 214.3,551.8"/><path d="M194.1,532.5C194.6,534.3 195.4,540.1 196.8,543.0C198.1,545.9 201.1,548.8 202.0,550.0"/><path d="M158.3,558.8L157.4,565.8"/><path d="M204.6,564.9C204.8,564.2 206.5,563.7 207.3,564.0C208.0,564.3 209.2,565.9 209.0,566.6C208.9,567.4 207.1,568.7 206.4,568.4C205.6,568.1 204.5,565.6 204.6,564.9Z"/><ellipse cx="188.0" cy="571.4" rx="3.2" ry="1.6"/><path d="M223.0,508.0C224.2,508.6 229.1,509.8 230.0,511.5C230.9,513.3 229.4,516.8 228.3,518.5C227.1,520.3 223.3,520.5 223.0,522.0C222.7,523.5 225.3,525.9 226.5,527.3C227.7,528.6 229.4,529.4 230.0,529.9"/><path d="M167.0,578.0C167.6,579.2 169.6,582.8 170.5,585.0C171.4,587.2 172.0,590.1 172.3,591.1"/><path d="M181.0,577.1C181.9,578.4 184.5,584.6 186.3,585.0C188.0,585.4 189.5,581.2 191.5,579.8C193.5,578.3 197.3,576.8 198.5,576.3"/><path d="M179.3,578.0L178.4,590.3"/><path d="M198.5,576.3C200.0,577.7 204.6,582.7 207.3,585.0C209.9,587.3 213.1,589.4 214.3,590.3"/><path d="M216.0,578.0C216.6,579.2 218.0,583.0 219.5,585.0C221.0,587.0 223.9,589.4 224.8,590.3"/><path d="M182.8,637.0C181.6,638.8 177.8,643.7 175.8,647.5C173.7,651.3 171.8,655.7 170.5,659.8C169.2,663.8 168.2,668.5 167.9,672.0C167.6,675.5 168.6,679.3 168.8,680.8"/><path d="M182.8,637.0C183.0,638.8 183.8,644.0 184.5,647.5C185.2,651.0 186.1,654.5 187.1,658.0C188.1,661.5 190.0,666.8 190.6,668.5"/><path d="M190.6,668.5L192.4,662.4L198.5,665.0L205.5,666.8"/><path d="M207.3,638.8C207.1,640.5 206.2,645.8 206.4,649.3C206.5,652.8 207.7,656.5 208.1,659.8C208.6,663.0 208.9,667.0 209.0,668.5"/><path d="M207.3,638.8C208.7,639.9 213.1,643.7 216.0,645.8C218.9,647.8 222.4,650.1 224.8,651.0C227.1,651.9 229.1,651.0 230.0,651.0"/><path d="M194.1,678.1C194.3,677.4 196.9,677.2 198.5,677.3C200.1,677.3 203.2,678.0 203.8,678.7C204.3,679.3 203.0,680.6 202.0,681.1C201.0,681.6 198.9,682.1 197.6,681.6C196.3,681.1 194.0,678.9 194.1,678.1Z"/><path d="M168.8,680.8C169.9,681.3 172.8,683.4 175.8,684.3C178.7,685.1 182.2,685.7 186.3,686.0C190.3,686.3 195.6,686.4 200.3,686.0C204.9,685.6 210.2,684.5 214.3,683.4C218.3,682.2 221.5,680.6 224.8,679.0C228.0,677.4 232.0,674.6 233.5,673.8"/><path d="M160.9,664.1C160.4,661.6 161.5,660.2 162.6,662.4C163.8,664.6 167.1,674.2 167.9,677.3C168.6,680.3 167.4,680.8 167.0,680.8C166.6,680.8 166.3,680.0 165.3,677.3C164.2,674.5 161.3,666.6 160.9,664.1Z"/><path d="M162.6,680.8C162.9,681.6 163.1,684.4 164.4,686.0C165.7,687.6 168.3,689.8 170.5,690.4C172.7,691.0 176.2,690.2 177.5,689.5C178.8,688.8 179.3,686.9 178.4,686.0C177.5,685.1 173.3,684.5 172.3,684.3"/><path d="M167.0,690.4C166.9,692.0 166.1,696.9 166.1,700.0C166.1,703.1 166.9,707.3 167.0,708.8"/><path d="M177.5,690.4C177.8,692.0 178.8,696.8 179.3,700.0C179.7,703.2 180.0,708.0 180.1,709.6"/><path d="M334.0,683.8C335.0,684.2 338.6,684.9 340.4,685.9C342.2,687.0 342.5,688.4 344.6,690.2C346.8,692.0 350.0,695.0 353.2,696.6C356.4,698.2 362.1,699.3 363.9,699.8"/><path d="M462.6,313.7C464.0,313.5 468.1,312.2 471.0,312.6C473.8,313.0 477.2,314.2 479.8,315.9C482.3,317.5 485.3,321.4 486.4,322.5"/><path d="M546.9,385.2L539.2,386.3L532.6,383.0"/><path d="M530.4,378.6C530.5,380.4 531.8,386.3 531.5,389.6C531.1,392.9 528.7,396.9 528.2,398.4"/><path d="M524.9,402.8C525.4,404.2 526.9,409.2 528.2,411.6C529.4,413.9 531.8,416.1 532.6,417.1"/><path d="M532.6,417.1L524.9,414.9L519.4,411.6L515.0,417.1L511.7,418.2L508.4,411.6L502.9,411.6"/><path d="M417.1,370.9L427.0,372.0L433.6,369.8"/><path d="M433.6,369.8C433.2,372.0 432.7,379.3 431.4,383.0C430.1,386.6 428.1,389.4 425.9,391.8C423.7,394.1 419.5,396.3 418.2,397.3"/><path d="M418.2,397.3L429.2,397.3L438.0,394.0"/><path d="M438.0,394.0C438.7,395.4 440.9,399.8 442.4,402.8C443.9,405.7 446.1,410.1 446.8,411.6"/><path d="M446.8,411.6L449.0,405.0L451.2,400.6"/><path d="M468.8,353.3C467.3,354.9 462.9,360.2 460.0,363.2C457.0,366.1 454.1,369.0 451.2,370.9C448.3,372.7 443.9,373.6 442.4,374.2"/><path d="M494.1,358.8C493.9,360.6 493.5,366.5 493.0,369.8C492.4,373.1 491.9,376.2 490.8,378.6C489.7,381.0 487.1,383.2 486.4,384.1"/><path d="M494.1,358.8C495.4,360.6 499.0,366.5 501.8,369.8C504.5,373.1 507.6,376.4 510.6,378.6C513.5,380.8 517.9,382.2 519.4,383.0"/><path d="M438.0,347.8C437.8,350.0 436.5,356.6 436.9,361.0C437.3,365.4 438.9,370.1 440.2,374.2C441.5,378.2 443.9,383.3 444.6,385.2"/><path d="M523.8,367.6C524.1,369.4 526.0,374.5 526.0,378.6C526.0,382.6 525.6,388.5 523.8,391.8C521.9,395.1 517.5,397.1 515.0,398.4C512.4,399.6 509.5,399.3 508.4,399.5"/><path d="M468.8,409.4C469.9,410.8 472.4,417.8 475.4,418.2C478.3,418.5 484.5,412.7 486.4,411.6"/><path d="M475.4,418.2L477.6,411.6"/><path d="M466.6,438.0C469.1,438.3 477.6,440.2 482.0,440.2C486.4,440.2 491.1,438.3 493.0,438.0"/><path d="M482.0,444.5C482.2,443.4 485.1,440.5 486.4,440.2C487.7,439.8 489.9,441.3 489.7,442.3C489.5,443.4 486.6,446.4 485.3,446.7C484.0,447.1 481.8,445.6 482.0,444.5Z"/><path d="M457.8,435.8C458.1,434.3 459.2,429.9 460.0,427.0C460.8,424.0 462.2,419.6 462.6,418.2"/></g>
<g fill="none" stroke="#404040" stroke-width="0.8" stroke-linecap="round" stroke-linejoin="round"><path d="M168.9,156.5C169.8,155.4 172.0,151.5 174.5,149.7C177.0,147.8 180.9,146.0 183.8,145.5C186.8,145.0 190.7,146.4 192.1,146.6"/><path d="M380.1,174.3C381.2,173.4 384.4,170.4 386.9,169.4C389.3,168.4 392.2,168.3 394.6,168.4C397.1,168.6 400.3,170.1 401.4,170.4"/><path d="M453.8,145.5C454.7,145.2 456.9,143.6 459.0,143.5C461.0,143.3 464.2,143.8 466.2,144.5C468.3,145.2 470.5,147.1 471.4,147.6"/><path d="M284.2,270.8C286.0,270.2 291.3,268.0 295.2,267.5C299.0,266.9 304.0,266.8 307.3,267.5C310.6,268.2 313.7,271.2 315.0,271.9"/><path d="M176.9,340.7C178.1,340.0 181.6,337.1 184.2,336.6C186.8,336.0 189.9,336.6 192.4,337.6C195.0,338.6 198.5,341.9 199.7,342.8"/><path d="M291.7,430.7C293.1,430.5 297.3,429.3 300.0,429.7C302.8,430.0 306.9,432.3 308.3,432.8"/><path d="M369.2,433.8C370.4,433.1 373.8,430.2 376.4,429.7C379.0,429.1 383.3,430.5 384.7,430.7"/></g>
<g fill="none" stroke="#1e1e1e" stroke-width="1.49" stroke-linecap="round" stroke-linejoin="round"><path d="M161.0,171.4C162.8,169.3 167.6,162.3 171.4,159.0C175.2,155.7 179.3,153.5 183.8,151.7C188.3,149.9 193.5,148.9 198.3,148.2C203.1,147.5 208.0,147.4 212.8,147.6C217.6,147.8 222.5,148.5 227.3,149.7C232.1,150.9 237.3,152.6 241.8,154.8C246.3,157.1 250.7,160.0 254.2,163.1C257.6,166.2 260.1,169.7 262.5,173.5C264.9,177.3 267.0,182.1 268.7,185.9C270.4,189.7 271.1,193.5 272.8,196.2C274.6,199.0 276.8,200.7 279.0,202.4C281.3,204.2 285.1,205.9 286.3,206.6"/><path d="M282.4,485.6C283.6,485.2 286.7,483.7 289.7,483.5C292.6,483.3 296.9,483.7 300.0,484.5C303.1,485.4 306.9,488.0 308.3,488.7"/><path d="M322.8,487.6C324.2,487.3 328.3,485.9 331.1,485.6C333.8,485.2 337.3,485.2 339.4,485.6C341.4,485.9 342.8,487.3 343.5,487.6"/><path d="M352.6,487.6C353.8,487.3 357.3,485.7 359.8,485.6C362.4,485.4 365.9,485.9 368.1,486.6C370.4,487.3 372.4,489.2 373.3,489.7"/><path d="M387.8,488.7C389.0,488.1 392.1,486.1 395.0,485.6C398.0,485.0 402.4,485.0 405.4,485.6C408.3,486.1 411.4,488.1 412.6,488.7"/><path d="M429.2,358.8C429.9,356.6 431.4,349.6 433.6,345.6C435.8,341.6 439.1,337.9 442.4,334.6C445.7,331.3 449.0,328.2 453.4,325.8C457.8,323.4 463.3,320.8 468.8,320.3C474.3,319.7 483.4,322.1 486.4,322.5"/></g>
<g fill="none" stroke="#404040" stroke-width="1.03" stroke-linecap="round" stroke-linejoin="round"><path d="M286.3,206.6C285.1,207.1 281.6,209.5 279.0,209.7C276.5,209.9 271.8,206.1 270.8,207.6C269.7,209.2 271.4,215.2 272.8,219.0C274.2,222.8 279.4,228.8 279.0,230.4C278.7,231.9 273.2,229.0 270.8,228.3C268.3,227.6 265.9,224.7 264.5,226.3C263.2,227.8 263.5,234.0 262.5,237.6C261.4,241.3 260.1,247.3 258.3,248.0C256.6,248.7 253.2,242.8 252.1,241.8"/><path d="M252.1,241.8L245.9,247.0L239.7,248.0"/><path d="M139.3,212.8L155.9,211.8"/><path d="M155.9,211.8C156.0,213.7 157.8,218.8 156.9,223.1C156.0,227.5 151.7,235.2 150.7,237.6"/><path d="M150.7,237.6L163.1,231.4L167.3,241.8L173.5,248.4L174.5,239.7"/><path d="M196.2,166.2C195.4,168.1 192.1,173.6 191.1,177.6C190.0,181.6 189.5,185.5 190.0,190.0C190.5,194.5 192.1,200.0 194.2,204.5C196.2,209.0 199.3,213.7 202.4,216.9C205.6,220.2 211.1,223.0 212.8,224.2"/><path d="M170.4,227.3C171.6,228.7 174.3,233.2 177.6,235.6C180.9,238.0 185.2,240.3 190.0,241.8C194.9,243.2 201.1,244.1 206.6,244.3C212.1,244.4 218.0,243.7 223.1,242.8C228.3,241.9 233.8,240.2 237.6,238.7C241.4,237.1 244.5,234.4 245.9,233.5"/><path d="M186.9,209.7C189.5,209.9 193.5,210.9 195.2,212.8C196.9,214.7 197.6,218.5 197.3,221.1C196.9,223.7 195.2,226.8 193.1,228.3C191.1,229.9 187.4,230.7 184.9,230.4C182.3,230.0 179.2,228.3 177.6,226.3C176.1,224.2 175.2,220.4 175.5,218.0C175.9,215.6 177.8,213.1 179.7,211.8C181.6,210.4 184.3,209.5 186.9,209.7Z"/><ellipse cx="187.5" cy="218.6" rx="2.7" ry="4.1"/><path d="M234.5,210.7C237.1,210.9 241.1,211.9 242.8,213.8C244.5,215.7 245.2,219.5 244.9,222.1C244.5,224.7 242.8,227.8 240.7,229.4C238.7,230.9 235.1,231.8 232.5,231.4C229.9,231.1 226.8,229.4 225.2,227.3C223.7,225.2 222.8,221.4 223.1,219.0C223.5,216.6 225.4,214.2 227.3,212.8C229.2,211.4 231.9,210.6 234.5,210.7Z"/><ellipse cx="234.9" cy="219.4" rx="2.9" ry="4.3"/><path d="M204.5,235.6C205.2,234.7 207.6,233.5 209.7,233.5C211.8,233.5 216.1,234.5 216.9,235.6C217.8,236.6 216.1,238.7 214.9,239.7C213.7,240.7 211.2,241.5 209.7,241.4C208.1,241.2 206.4,239.6 205.6,238.7C204.7,237.7 203.8,236.4 204.5,235.6Z"/><path d="M190.0,244.9C191.8,245.6 195.9,248.7 200.4,249.0C204.9,249.4 211.4,248.0 216.9,247.0C222.5,245.9 230.0,242.9 233.5,242.8C236.9,242.7 236.9,245.7 237.6,246.3"/><path d="M184.9,256.3C186.1,256.6 189.5,257.4 192.1,258.3C194.7,259.3 199.0,261.4 200.4,262.1"/><path d="M184.9,256.3C184.5,257.3 182.9,260.6 182.8,262.5C182.7,264.4 183.0,266.5 184.2,267.7C185.4,268.8 187.5,269.4 190.0,269.1C192.5,268.8 197.8,266.2 199.3,265.6"/><path d="M198.3,252.1C198.8,251.7 200.4,249.5 201.4,249.6C202.4,249.8 203.5,252.9 204.5,253.2C205.6,253.4 206.5,250.9 207.6,251.1C208.7,251.3 210.8,253.1 211.1,254.6C211.5,256.2 210.8,258.9 209.7,260.4C208.6,261.9 206.1,263.4 204.5,263.5C202.9,263.6 200.7,261.3 200.0,260.8"/><path d="M210.7,262.5C212.5,262.5 216.6,263.4 221.1,262.5C225.6,261.5 234.9,257.6 237.6,256.7"/><path d="M194.1,269.8C193.4,271.8 191.4,277.6 189.8,282.0C188.1,286.4 185.5,292.9 184.5,296.0C183.5,299.1 183.8,299.6 183.6,300.4"/><path d="M183.6,300.4L195.0,303.9"/><path d="M195.9,304.8C198.1,305.2 204.8,307.2 209.0,307.4C213.2,307.5 217.2,306.5 221.3,305.6C225.3,304.8 229.1,303.6 233.5,302.1C237.9,300.7 245.2,297.8 247.5,296.9"/><path d="M237.0,280.3C237.9,281.4 240.4,284.6 242.3,287.3C244.2,289.9 247.4,294.8 248.4,296.4"/><path d="M195.9,304.8L196.8,315.3L209.0,319.6L210.8,307.4"/><path d="M220.4,307.4L222.1,317.9L234.4,312.6L233.5,302.7"/><path d="M221.3,259.3C221.7,261.3 223.1,268.1 223.9,271.5C224.6,274.9 225.3,278.1 225.6,279.4"/><path d="M225.6,279.4L233.5,280.3L237.9,277.6L245.8,280.3L246.6,276.8"/><path d="M246.6,276.8C245.9,274.4 243.6,266.5 242.3,262.8C240.9,259.0 239.9,256.0 238.8,254.0C237.6,252.0 235.8,251.1 235.3,250.5"/><path d="M368.4,208.2C368.3,210.2 367.8,216.3 367.5,219.9C367.1,223.4 367.1,226.7 366.5,229.6C365.8,232.5 364.6,235.5 363.6,237.3C362.6,239.1 361.2,239.8 360.7,240.2"/><path d="M450.9,206.3C451.2,207.9 452.7,213.1 452.9,216.0C453.0,218.9 452.0,222.4 451.9,223.7"/><path d="M375.2,227.6C375.9,228.9 376.8,233.3 379.1,235.4C381.4,237.5 384.9,239.3 388.8,240.2C392.7,241.2 397.5,241.0 402.4,241.2C407.2,241.4 413.1,241.7 417.9,241.2C422.8,240.7 427.6,239.6 431.5,238.3C435.4,237.0 438.9,235.2 441.2,233.4C443.5,231.7 444.4,228.6 445.1,227.6"/><path d="M403.4,221.8C405.0,222.1 408.0,223.4 409.2,224.7C410.4,226.0 410.9,227.9 410.5,229.6C410.2,231.2 408.8,233.8 407.2,234.8C405.7,235.8 403.1,235.9 401.4,235.4C399.7,234.8 397.8,233.1 397.0,231.5C396.2,230.0 396.2,227.5 396.6,226.1C397.0,224.6 398.4,223.5 399.5,222.8C400.6,222.1 401.7,221.5 403.4,221.8Z"/><path d="M437.3,215.0C438.9,215.2 441.9,215.8 443.1,217.0C444.4,218.1 445.0,220.4 444.7,222.2C444.4,224.0 442.7,226.6 441.2,227.6C439.7,228.7 437.4,229.1 435.8,228.6C434.2,228.1 432.3,226.2 431.5,224.7C430.7,223.2 430.7,220.9 431.1,219.5C431.5,218.0 432.8,216.7 433.8,216.0C434.9,215.2 435.8,214.8 437.3,215.0Z"/><path d="M433.4,243.1C434.3,245.1 436.7,250.9 438.3,254.8C439.9,258.7 441.7,262.9 443.1,266.4C444.6,270.0 446.4,274.5 447.0,276.1"/><path d="M408.2,283.9C410.8,283.9 418.9,284.5 423.7,283.9C428.6,283.3 433.4,281.3 437.3,280.0C441.2,278.7 445.4,276.8 447.0,276.1"/><path d="M435.4,243.1C436.7,242.8 440.6,242.2 443.1,241.2C445.7,240.2 448.8,238.3 450.9,237.3C453.0,236.4 455.0,235.7 455.8,235.4"/><path d="M455.8,235.4C456.2,236.4 459.5,239.3 458.7,241.2C457.9,243.1 453.8,245.4 450.9,247.0C448.0,248.6 442.8,250.3 441.2,250.9"/><path d="M414.0,285.8L416.0,297.5L425.7,295.5L424.7,284.9"/><path d="M431.5,283.9L435.4,294.6L445.1,291.7L442.2,280.0"/><path d="M442.4,177.6C442.6,179.7 442.6,185.9 443.5,190.0C444.3,194.2 446.2,198.7 447.6,202.4C449.0,206.2 450.7,209.7 451.7,212.8C452.8,215.9 453.5,219.7 453.8,221.1"/><path d="M453.8,208.7C455.0,209.7 457.8,213.3 461.0,214.9C464.3,216.4 469.0,217.6 473.5,218.0C478.0,218.3 483.5,217.6 488.0,216.9C492.4,216.2 496.6,215.2 500.4,213.8C504.2,212.5 509.0,209.5 510.7,208.7"/><path d="M478.6,208.7L489.0,207.6L483.8,215.3L478.6,208.7"/><path d="M499.3,215.9C500.6,218.1 504.0,225.0 506.6,229.4C509.2,233.7 512.5,237.6 514.9,241.8C517.3,245.9 520.0,252.1 521.1,254.2"/><path d="M474.5,264.5C476.7,264.5 483.0,265.4 488.0,264.5C493.0,263.7 499.0,261.3 504.5,259.4C510.0,257.5 518.3,254.2 521.1,253.2"/><path d="M501.4,221.1C502.6,222.1 506.1,225.6 508.7,227.3C511.2,229.0 515.2,230.2 516.9,231.4C518.7,232.6 519.7,233.8 519.0,234.5C518.3,235.2 514.9,235.7 512.8,235.6C510.7,235.4 507.6,233.8 506.6,233.5"/><path d="M471.4,223.1C470.4,224.2 467.3,227.3 465.2,229.4C463.1,231.4 460.7,234.2 459.0,235.6C457.3,236.9 455.5,237.3 454.8,237.6"/><path d="M470.4,233.5C469.2,234.5 465.4,238.2 463.1,239.7C460.9,241.3 457.9,242.3 456.9,242.8"/><path d="M485.9,264.5L488.0,274.9L497.3,272.8L496.2,263.5"/><path d="M509.7,258.3L512.8,267.7L521.1,263.5L518.0,254.2"/><path d="M434.1,242.8C435.5,242.3 439.3,240.9 442.4,239.7C445.5,238.5 450.4,235.6 452.8,235.6C455.2,235.6 456.6,238.0 456.9,239.7C457.3,241.4 456.9,244.2 454.8,245.9C452.8,247.6 447.6,249.0 444.5,250.1C441.4,251.1 437.6,251.8 436.2,252.1"/><path d="M280.9,308.2C281.4,310.4 283.1,317.0 284.2,321.4C285.3,325.8 286.0,330.5 287.5,334.6C289.0,338.6 291.2,342.1 293.0,345.6C294.8,349.0 297.6,353.8 298.5,355.5"/><path d="M319.4,391.7C319.6,389.5 319.4,382.2 320.5,378.6C321.6,374.9 323.8,371.4 326.0,369.8C328.2,368.1 331.1,367.9 333.7,368.7C336.2,369.4 339.5,371.4 341.4,374.2C343.2,376.9 344.1,381.9 344.7,385.2C345.2,388.4 344.7,392.5 344.7,393.9"/><path d="M300.7,386.3C301.1,384.4 306.0,382.0 308.4,383.0C310.8,383.9 315.3,389.9 315.0,391.7C314.6,393.6 308.6,394.9 306.2,393.9C303.8,393.0 300.3,388.1 300.7,386.3Z"/><path d="M346.9,386.3C348.3,384.6 355.5,383.5 359.0,384.1C362.4,384.6 367.0,387.9 367.8,389.5C368.5,391.2 366.3,393.2 363.4,393.9C360.4,394.7 352.9,395.2 350.2,393.9C347.4,392.7 345.4,387.9 346.9,386.3Z"/><path d="M250.4,402.8C250.6,404.9 251.8,411.1 251.4,415.2C251.1,419.4 249.5,423.5 248.3,427.6C247.1,431.8 244.9,438.0 244.2,440.1"/><path d="M149.0,388.3C148.3,389.7 146.9,394.2 144.8,396.6C142.8,399.0 139.5,400.9 136.6,402.8C133.6,404.7 128.8,407.1 127.2,408.0"/><path d="M155.2,390.4C155.5,392.8 156.2,400.4 157.3,404.9C158.3,409.4 159.7,413.5 161.4,417.3C163.1,421.1 166.6,425.9 167.6,427.6"/><path d="M183.1,398.2C185.1,398.5 188.6,399.6 190.0,401.1C191.4,402.7 191.9,405.2 191.6,407.4C191.3,409.5 189.9,412.8 188.3,414.2C186.7,415.6 184.1,416.0 182.1,415.6C180.1,415.3 177.5,413.7 176.3,412.1C175.1,410.5 174.6,407.9 174.9,405.9C175.1,403.9 176.6,401.2 178.0,399.9C179.3,398.6 181.1,398.0 183.1,398.2Z"/><ellipse cx="183.1" cy="406.9" rx="2.5" ry="4.1"/><path d="M226.6,398.2C228.7,398.5 232.0,399.6 233.4,401.1C234.9,402.7 235.6,405.2 235.3,407.4C235.0,409.5 233.4,412.8 231.8,414.2C230.2,415.6 227.6,416.0 225.6,415.6C223.6,415.3 221.0,413.7 219.8,412.1C218.5,410.5 217.9,407.9 218.1,405.9C218.3,403.9 219.6,401.2 221.0,399.9C222.4,398.6 224.5,398.0 226.6,398.2Z"/><ellipse cx="224.5" cy="406.5" rx="2.7" ry="4.1"/><path d="M166.6,411.1C167.1,412.5 168.1,416.9 169.7,419.4C171.2,421.8 172.8,423.7 175.9,425.6C179.0,427.5 183.8,429.5 188.3,430.7C192.8,432.0 198.0,432.8 202.8,432.8C207.6,432.8 212.5,432.0 217.3,430.7C222.1,429.5 227.6,427.8 231.8,425.6C235.9,423.3 240.4,418.7 242.1,417.3"/><path d="M180.0,458.7C179.7,460.1 178.6,464.6 178.0,467.0C177.3,469.4 176.2,472.1 175.9,473.2"/><path d="M175.9,473.2L221.4,474.2"/><path d="M213.1,433.8C213.8,436.3 216.1,443.5 217.3,448.3C218.5,453.2 219.7,458.5 220.4,462.8C221.1,467.1 221.3,472.3 221.4,474.2"/><path d="M295.9,484.9C297.8,485.1 300.8,486.2 302.1,487.6C303.4,489.0 304.0,491.1 303.8,493.2C303.5,495.3 301.9,498.7 300.4,500.0C299.0,501.4 296.6,501.4 294.9,501.1C293.1,500.7 290.8,499.5 289.7,498.0C288.5,496.4 287.9,493.7 288.0,491.8C288.2,489.9 289.4,487.7 290.7,486.6C292.0,485.5 294.0,484.8 295.9,484.9Z"/><ellipse cx="296.3" cy="493.8" rx="2.3" ry="3.5"/><path d="M331.1,486.6C333.0,486.8 336.0,487.8 337.3,489.1C338.6,490.4 339.2,492.5 338.9,494.5C338.7,496.4 337.1,499.5 335.6,500.7C334.1,501.9 331.8,502.0 330.0,501.7C328.2,501.4 326.0,500.1 324.9,498.6C323.7,497.1 323.0,494.6 323.2,492.8C323.4,491.0 324.6,489.1 325.9,488.0C327.2,487.0 329.2,486.4 331.1,486.6Z"/><ellipse cx="328.0" cy="494.5" rx="2.1" ry="3.1"/><path d="M281.4,492.8C281.9,494.2 282.4,498.8 284.5,501.1C286.6,503.3 289.9,504.9 293.8,506.3C297.8,507.6 303.5,508.6 308.3,508.9C313.1,509.3 318.3,508.9 322.8,508.3C327.3,507.7 331.9,506.8 335.2,505.2C338.5,503.7 341.3,500.0 342.5,499.0"/><path d="M296.9,509.4C296.6,512.1 295.4,520.4 294.9,525.9C294.3,531.4 294.2,537.8 293.8,542.5C293.5,547.1 293.0,552.0 292.8,553.9"/><path d="M322.8,512.5C323.1,514.7 324.0,520.9 324.5,525.9C324.9,530.9 325.0,538.0 325.3,542.5C325.5,547.0 325.8,551.1 325.9,552.8"/><path d="M292.8,553.9L325.9,552.8"/><path d="M365.0,486.6C366.9,486.8 369.9,487.9 371.2,489.3C372.5,490.7 373.2,492.8 372.9,494.9C372.6,496.9 371.1,500.4 369.6,501.7C368.1,503.0 365.8,503.1 364.0,502.7C362.2,502.4 359.9,501.1 358.8,499.6C357.7,498.1 357.0,495.7 357.1,493.8C357.3,491.9 358.5,489.5 359.8,488.2C361.2,487.0 363.1,486.4 365.0,486.6Z"/><ellipse cx="367.7" cy="495.9" rx="2.1" ry="3.1"/><path d="M399.2,486.6C401.1,486.8 404.1,487.9 405.4,489.3C406.7,490.7 407.3,492.8 407.0,494.9C406.8,496.9 405.2,500.4 403.7,501.7C402.2,503.0 399.9,503.1 398.1,502.7C396.3,502.4 394.1,501.1 393.0,499.6C391.8,498.1 391.1,495.7 391.3,493.8C391.5,491.9 392.7,489.5 394.0,488.2C395.3,487.0 397.3,486.4 399.2,486.6Z"/><ellipse cx="398.8" cy="494.9" rx="2.3" ry="3.3"/><path d="M347.4,496.9C348.1,498.1 349.1,502.1 351.6,504.2C354.0,506.3 357.8,508.2 361.9,509.4C366.0,510.6 371.6,511.3 376.4,511.4C381.2,511.6 386.4,511.3 390.9,510.4C395.4,509.5 399.5,508.2 403.3,506.3C407.1,504.4 411.9,500.2 413.7,499.0"/><path d="M367.1,554.9L402.3,553.9"/><path d="M142.5,539.5C142.2,541.3 141.5,546.8 140.8,550.0C140.0,553.2 139.3,556.3 138.1,558.8C137.0,561.2 134.5,563.9 133.8,564.9"/><path d="M146.9,557.9C147.2,559.2 147.6,563.3 148.6,565.8C149.6,568.2 151.1,570.7 153.0,572.8C154.9,574.8 158.8,577.1 160.0,578.0"/><path d="M155.6,557.0C155.9,558.5 156.2,563.3 157.4,565.8C158.5,568.2 160.1,570.3 162.6,571.9C165.1,573.5 168.3,574.7 172.3,575.4C176.2,576.1 181.6,576.3 186.3,576.3C190.9,576.3 196.2,576.3 200.3,575.4C204.3,574.5 208.1,572.9 210.8,571.0C213.4,569.1 215.1,565.2 216.0,564.0"/><path d="M166.1,591.1L223.0,589.4"/><path d="M151.3,635.3C152.4,633.5 155.3,628.0 158.3,624.8C161.2,621.5 164.7,618.5 168.8,616.0C172.8,613.5 177.8,611.3 182.8,609.9C187.7,608.4 193.3,607.5 198.5,607.3C203.8,607.0 209.3,607.3 214.3,608.1C219.2,609.0 224.2,610.6 228.3,612.5C232.3,614.4 235.8,616.9 238.8,619.5C241.7,622.1 243.9,625.0 245.8,628.3C247.7,631.5 249.0,635.5 250.1,638.8C251.3,642.0 251.2,645.5 252.8,647.5C254.4,649.5 258.6,650.4 259.8,651.0"/><path d="M217.8,654.5C219.9,654.5 222.9,655.3 224.4,656.6C225.9,657.9 226.6,660.4 226.5,662.4C226.4,664.4 225.3,667.2 223.9,668.5C222.4,669.8 219.8,670.3 217.8,670.3C215.7,670.2 213.1,669.5 211.6,668.2C210.2,666.8 209.0,664.3 209.0,662.4C209.0,660.5 210.2,657.9 211.6,656.6C213.1,655.3 215.6,654.5 217.8,654.5Z"/><ellipse cx="217.2" cy="662.4" rx="3.5" ry="3.9"/><path d="M147.8,710.2L247.5,710.5"/><path d="M462.6,313.7C463.6,312.6 466.3,308.7 468.8,307.1C471.3,305.5 474.6,304.4 477.6,304.2C480.5,304.1 484.2,304.6 486.4,306.0C488.5,307.4 490.0,309.7 490.3,312.6C490.7,315.5 488.9,321.8 488.6,323.6"/><path d="M429.2,358.8C428.8,359.9 429.0,363.4 427.0,365.4C425.0,367.4 418.7,370.0 417.1,370.9"/><path d="M468.8,353.3C469.1,355.3 469.9,361.2 471.0,365.4C472.1,369.6 473.4,374.5 475.4,378.6C477.4,382.6 480.5,386.6 483.1,389.6C485.6,392.5 489.5,395.1 490.8,396.2"/><path d="M456.7,375.7C458.7,376.0 462.5,377.0 463.9,378.6C465.4,380.1 465.8,383.0 465.5,385.2C465.1,387.3 463.5,390.2 461.7,391.3C460.0,392.5 457.2,392.7 455.1,392.2C453.1,391.7 450.5,390.2 449.4,388.5C448.3,386.7 448.2,383.8 448.5,381.9C448.9,379.9 450.3,377.8 451.6,376.8C453.0,375.8 454.6,375.4 456.7,375.7Z"/><path d="M460.0,381.9C459.5,381.8 458.1,380.8 457.3,381.2C456.6,381.6 455.6,383.1 455.6,384.1C455.6,385.0 456.6,386.6 457.3,386.9C458.1,387.3 459.5,386.4 460.0,386.3"/><path d="M498.5,383.4C500.5,383.7 504.3,384.7 505.7,386.3C507.2,387.8 507.6,390.7 507.3,392.9C506.9,395.0 505.2,397.9 503.5,399.0C501.8,400.2 499.0,400.4 496.9,399.9C494.9,399.4 492.3,397.9 491.2,396.2C490.1,394.4 490.0,391.5 490.3,389.6C490.7,387.7 492.1,385.8 493.4,384.7C494.8,383.7 496.4,383.2 498.5,383.4Z"/><ellipse cx="499.1" cy="391.8" rx="2.4" ry="3.3"/><ellipse cx="476.5" cy="401.0" rx="4.4" ry="2.9"/><path d="M441.3,383.0C441.8,384.8 442.6,390.7 444.6,394.0C446.6,397.3 449.7,400.6 453.4,402.8C457.0,405.0 461.8,406.2 466.6,407.2C471.3,408.1 476.8,408.6 482.0,408.3C487.1,407.9 493.3,406.2 497.4,405.0C501.4,403.7 504.7,401.3 506.2,400.6"/><path d="M463.3,421.5C464.6,422.0 467.9,423.7 471.0,424.8C474.1,425.9 479.0,428.4 482.0,428.1C484.9,427.7 486.7,424.8 488.6,422.6C490.4,420.4 492.2,416.1 493.0,414.9"/><path d="M460.0,440.2C461.8,441.3 466.9,445.5 471.0,446.7C475.0,448.0 479.8,448.6 484.2,447.8C488.6,447.1 495.2,443.3 497.4,442.3"/></g>
<g fill="none" stroke="#1e1e1e" stroke-width="1.15" stroke-linecap="round" stroke-linejoin="round"><path d="M161.0,171.4C160.0,173.5 156.7,179.3 154.8,183.8C152.9,188.3 151.4,194.5 149.7,198.3C147.9,202.1 146.2,204.2 144.5,206.6C142.8,209.0 140.2,211.8 139.3,212.8"/><path d="M408.2,245.1C408.1,247.4 407.4,253.8 407.2,258.7C407.1,263.5 407.1,270.0 407.2,274.2C407.4,278.4 408.1,282.3 408.2,283.9"/><path d="M473.5,221.1C473.5,223.8 473.5,232.1 473.5,237.6C473.5,243.2 473.3,249.5 473.5,254.2C473.6,258.9 474.3,263.7 474.5,265.6"/><path d="M293.0,336.8C293.4,338.2 292.6,343.0 295.2,345.6C297.8,348.1 303.3,350.7 308.4,352.2C313.5,353.6 320.1,354.4 326.0,354.4C331.8,354.4 338.1,353.3 343.6,352.2C349.1,351.1 354.2,350.0 359.0,347.8C363.7,345.6 368.7,341.9 372.2,339.0C375.6,336.0 378.6,331.6 379.9,330.2"/><path d="M200.7,420.4C201.4,419.2 204.7,418.4 206.9,418.3C209.2,418.2 213.1,418.7 214.2,419.8C215.2,420.8 214.2,423.2 213.1,424.5C212.1,425.8 209.7,427.5 208.0,427.6C206.2,427.8 204.0,426.8 202.8,425.6C201.6,424.4 200.0,421.6 200.7,420.4Z"/><path d="M169.7,431.8C169.7,430.4 169.5,425.4 169.7,423.5C169.9,421.6 169.7,420.9 170.7,420.4C171.7,419.9 174.3,419.5 175.9,420.4C177.4,421.3 179.0,423.5 180.0,425.6C181.1,427.6 181.8,431.6 182.1,432.8"/><path d="M170.7,431.8C170.5,433.2 169.0,437.3 169.7,440.1C170.4,442.8 172.8,445.6 174.9,448.3C176.9,451.1 179.9,455.6 182.1,456.6C184.3,457.7 186.6,455.9 188.3,454.5C190.0,453.2 192.1,450.8 192.4,448.3C192.8,445.9 191.8,442.5 190.4,440.1C189.0,437.6 185.2,434.9 184.2,433.8"/><path d="M264.8,463.8C265.5,461.7 266.9,455.2 269.0,451.4C271.0,447.6 274.2,443.8 277.3,441.0C280.4,438.3 283.8,436.4 287.6,434.8C291.4,433.3 295.9,432.1 300.0,431.7C304.2,431.4 308.0,432.1 312.4,432.8C316.9,433.5 322.5,434.1 326.9,435.9C331.4,437.6 335.9,440.5 339.4,443.1C342.8,445.7 345.4,448.6 347.6,451.4C349.9,454.2 352.0,458.3 352.8,459.7"/><path d="M345.3,459.7C346.7,457.6 350.5,450.7 353.6,447.3C356.7,443.8 360.2,441.0 364.0,439.0C367.8,436.9 371.9,435.9 376.4,434.8C380.9,433.8 386.4,432.6 390.9,432.8C395.4,432.9 399.2,434.0 403.3,435.9C407.4,437.8 412.3,440.9 415.7,444.2C419.2,447.4 421.6,451.9 424.0,455.5C426.4,459.2 428.1,463.1 430.2,465.9C432.3,468.6 433.7,470.0 436.4,472.1C439.2,474.2 445.1,477.3 446.8,478.3"/><path d="M343.3,472.1C343.5,473.8 343.6,479.0 344.3,482.4C345.0,485.9 346.4,489.3 347.4,492.8C348.5,496.2 350.0,501.4 350.5,503.1"/><path d="M373.3,512.5C373.1,514.7 372.5,520.9 372.3,525.9C372.0,530.9 371.8,537.6 371.8,542.5C371.8,547.3 372.2,552.8 372.3,554.9"/><path d="M397.1,513.5C397.4,515.6 398.7,521.1 399.2,525.9C399.7,530.7 399.9,537.8 400.2,542.5C400.5,547.1 401.1,552.0 401.2,553.9"/><path d="M514.1,569.8C515.9,570.2 522.5,570.8 525.0,572.0C527.6,573.3 528.7,576.6 529.4,577.5"/><path d="M449.5,683.1C448.8,685.0 446.4,690.4 445.2,694.1C443.9,697.7 442.6,702.6 441.9,705.0C441.2,707.4 441.0,707.7 440.8,708.3"/><path d="M490.0,687.5C489.8,689.3 488.9,694.8 488.9,698.4C488.9,702.1 489.3,707.0 490.0,709.4C490.7,711.8 492.7,712.1 493.3,712.7"/><path d="M457.8,405.0C458.3,404.6 460.2,402.0 461.1,402.8C462.0,403.5 462.5,407.3 463.3,409.4C464.0,411.4 465.5,413.0 465.5,414.9C465.5,416.7 464.4,419.3 463.3,420.4C462.2,421.5 460.0,422.2 458.9,421.5C457.8,420.7 456.9,418.7 456.7,416.0C456.5,413.2 457.6,406.8 457.8,405.0"/><path d="M463.3,420.4C462.9,422.2 461.6,427.7 461.1,431.4C460.5,435.0 460.2,440.5 460.0,442.3"/><path d="M497.4,409.4C497.6,411.6 498.1,418.2 498.5,422.6C498.8,427.0 499.6,432.5 499.6,435.8C499.6,439.1 498.7,441.3 498.5,442.3"/></g>
<g fill="none" stroke="#7a7a7a" stroke-width="0.8" stroke-linecap="round" stroke-linejoin="round"><path d="M221.1,194.2C221.4,195.5 222.6,199.9 223.1,202.4C223.7,205.0 224.0,208.5 224.2,209.7"/><path d="M179.7,198.3L190.0,199.3"/><path d="M161.0,190.0C160.4,192.1 157.4,198.0 156.9,202.4C156.4,206.9 156.9,212.5 157.9,216.9C159.0,221.4 162.3,227.3 163.1,229.4"/><path d="M262.5,208.7C263.0,210.4 265.6,215.6 265.6,219.0C265.6,222.5 263.9,226.6 262.5,229.4C261.1,232.1 258.2,234.5 257.3,235.6"/><path d="M171.4,211.8C171.7,213.3 172.6,218.3 173.5,221.1C174.3,223.8 176.1,227.1 176.6,228.3"/><path d="M248.0,212.8C248.2,214.5 249.4,220.0 249.0,223.1C248.7,226.3 246.4,230.0 245.9,231.4"/><path d="M262.5,212.8C263.3,213.5 267.0,214.9 267.7,216.9C268.3,219.0 266.8,223.8 266.6,225.2"/><path d="M408.2,163.6C409.2,164.2 412.1,166.7 414.0,167.5C416.0,168.3 418.9,168.3 419.9,168.4"/><path d="M423.7,206.3L425.7,214.0"/><path d="M427.6,208.2L429.6,216.0"/><path d="M402.4,264.5C402.6,265.1 402.7,267.4 403.4,268.4C404.0,269.3 405.8,270.0 406.3,270.3"/><path d="M477.6,146.6C480.0,146.4 487.3,144.5 492.1,145.5C496.9,146.6 502.4,149.8 506.6,152.8C510.7,155.7 515.2,161.4 516.9,163.1"/><path d="M511.8,261.4L520.0,258.3"/><path d="M332.6,268.6C335.1,269.0 342.8,269.1 348.0,270.8C353.1,272.4 359.0,275.4 363.4,278.5C367.8,281.6 372.5,287.7 374.4,289.5"/><path d="M320.5,341.2L326.0,339.0"/><path d="M322.7,343.4L329.3,340.7"/><path d="M326.0,345.1L332.6,342.3"/><path d="M341.4,383.0C341.7,384.4 342.5,389.7 343.6,391.7C344.7,393.8 347.2,394.5 348.0,395.0"/><path d="M182.1,335.5C183.5,335.4 187.8,333.8 190.4,334.5C193.0,335.2 196.4,338.8 197.6,339.7"/><path d="M235.9,415.2L242.1,411.1"/><path d="M238.0,418.3L244.2,414.2"/><path d="M172.8,414.2L176.9,417.3"/><path d="M182.8,614.3C183.6,614.0 186.3,612.6 188.0,612.5C189.8,612.4 192.4,613.2 193.3,613.4"/><path d="M175.8,644.0L181.0,645.8"/><path d="M212.5,643.1L219.5,647.5"/><path d="M219.5,672.9L223.0,672.0"/><path d="M223.0,673.8L226.5,672.9"/><path d="M158.3,696.5C158.0,697.7 157.2,701.5 156.5,703.5C155.8,705.5 154.3,707.9 153.9,708.8"/><path d="M334.0,683.8C333.3,684.5 331.1,687.0 329.7,688.1C328.3,689.1 326.1,689.8 325.4,690.2"/><path d="M338.2,620.8C339.3,622.1 342.5,626.0 344.6,628.3C346.8,630.6 350.0,633.6 351.1,634.7"/><path d="M282.7,641.1C284.2,642.5 288.4,646.8 291.3,649.6C294.1,652.5 297.3,655.7 299.8,658.2C302.3,660.7 305.2,663.5 306.2,664.6"/><path d="M283.8,669.9C285.1,670.3 289.3,671.9 291.3,672.1C293.2,672.2 294.8,671.2 295.6,671.0"/><ellipse cx="296.6" cy="689.1" rx="5.3" ry="1.5"/><path d="M455.0,549.1C455.7,548.7 458.1,546.8 459.4,546.9C460.7,546.9 462.1,549.1 462.7,549.5"/><path d="M415.6,577.5L420.0,581.9"/><path d="M440.8,597.2L448.4,596.1"/><path d="M483.4,600.5L492.2,600.5"/><path d="M432.0,625.6L430.9,630.0"/><path d="M445.7,389.6L449.0,391.8"/><path d="M502.9,402.8L507.3,400.6"/></g>
<g fill="none" stroke="#1e1e1e" stroke-width="1.72" stroke-linecap="round" stroke-linejoin="round"><path d="M167.3,210.3C168.5,209.9 171.4,208.5 174.5,208.0C177.6,207.6 182.3,207.2 185.9,207.6C189.5,208.1 194.5,210.2 196.2,210.7"/><path d="M218.0,213.2C219.5,212.7 223.7,210.9 227.3,210.3C230.9,209.7 235.7,209.5 239.7,209.7C243.7,209.9 249.2,211.4 251.1,211.8"/><path d="M453.8,203.5C454.7,203.0 457.3,201.1 459.0,200.8C460.7,200.4 462.4,200.8 464.2,201.4C465.9,202.0 468.5,204.0 469.3,204.5"/><path d="M489.0,201.4C489.9,200.9 492.3,198.9 494.2,198.3C496.1,197.7 498.3,197.5 500.4,197.9C502.4,198.2 505.6,200.0 506.6,200.4"/><path d="M167.6,399.7C169.0,399.2 172.8,397.3 175.9,397.0C179.0,396.7 182.8,396.8 186.2,397.6C189.7,398.4 194.9,401.1 196.6,401.8"/><path d="M213.1,399.7C214.5,399.1 218.3,396.8 221.4,396.2C224.5,395.6 228.5,395.6 231.8,396.2C235.1,396.8 239.5,399.1 241.1,399.7"/></g>
<g fill="none" stroke="#7a7a7a" stroke-width="0.92" stroke-linecap="round" stroke-linejoin="round"><path d="M219.0,246.3L221.1,256.3"/><path d="M225.2,245.1L227.3,255.2"/><path d="M231.4,243.8L233.5,254.2"/><path d="M202.9,266.3L221.3,266.3"/><path d="M203.8,263.6L221.3,262.8"/><path d="M375.2,194.6C376.2,193.0 378.8,187.7 381.0,184.9C383.3,182.2 387.5,179.3 388.8,178.1"/><path d="M379.1,208.2C378.9,209.8 378.0,214.7 378.1,217.9C378.3,221.2 379.1,224.7 380.1,227.6C381.0,230.5 382.2,232.8 384.0,235.4C385.7,238.0 388.3,241.2 390.8,243.1C393.2,245.1 397.2,246.4 398.5,247.0"/><path d="M398.5,214.0L404.3,213.7"/><path d="M427.6,208.2L433.4,207.2"/><path d="M446.6,165.2C447.9,163.5 451.4,157.6 454.8,154.8C458.3,152.1 462.8,149.8 467.3,148.6C471.7,147.4 476.9,147.4 481.7,147.6C486.6,147.8 493.8,149.3 496.2,149.7"/><path d="M514.9,190.0C515.9,190.2 519.4,190.4 521.1,191.1C522.8,191.8 524.5,193.7 525.2,194.2"/><path d="M282.0,295.0C283.8,292.8 289.0,285.1 293.0,281.8C297.0,278.5 304.0,276.3 306.2,275.2"/><path d="M370.0,321.4C369.8,323.6 369.6,330.9 368.9,334.6C368.1,338.2 366.1,341.9 365.6,343.4"/><path d="M301.8,322.5L311.7,323.6"/><path d="M333.7,323.6L342.5,322.5"/><path d="M159.3,367.6C161.1,365.7 165.9,359.2 169.7,356.2C173.5,353.3 180.0,351.0 182.1,350.0"/><path d="M229.7,351.0C232.1,353.1 240.4,358.6 244.2,363.5C248.0,368.3 250.4,374.9 252.5,380.0C254.5,385.2 255.9,392.1 256.6,394.5"/><path d="M279.3,445.2C281.1,443.8 285.9,438.8 289.7,436.9C293.5,435.0 300.0,434.3 302.1,433.8"/><path d="M300.0,478.3L306.2,477.9"/><path d="M322.8,480.4L330.0,481.4"/><path d="M339.1,488.7C339.8,490.0 342.9,493.8 343.3,496.9C343.6,500.0 342.4,504.5 341.2,507.3C340.0,510.0 336.9,512.5 336.0,513.5"/><path d="M147.8,525.5C149.2,523.8 153.0,517.9 156.5,515.0C160.0,512.1 164.4,509.8 168.8,508.0C173.1,506.3 180.4,505.1 182.8,504.5"/><path d="M212.5,497.5L210.8,518.9"/><path d="M220.4,502.8C221.7,502.5 225.5,500.4 228.3,501.0C231.0,501.6 235.1,503.9 237.0,506.3C238.9,508.6 239.6,512.4 239.6,515.0C239.6,517.6 238.6,521.1 237.0,522.0C235.4,522.9 232.0,521.4 230.0,520.3C228.0,519.1 225.6,515.9 224.8,515.0"/><ellipse cx="212.0" cy="529.5" rx="2.6" ry="2.3"/><ellipse cx="225.3" cy="533.4" rx="3.0" ry="3.0"/><path d="M139.9,512.4C140.2,511.6 140.8,509.0 141.6,508.0C142.5,507.0 144.1,506.1 145.1,506.3C146.1,506.4 147.3,508.4 147.8,508.9"/><path d="M147.8,502.8C148.3,502.3 150.2,500.9 151.3,500.1C152.3,499.4 153.4,498.7 153.9,498.4"/><path d="M228.3,539.5C228.4,540.4 229.1,543.3 229.1,544.8C229.1,546.2 228.4,547.7 228.3,548.3"/><path d="M189.8,608.1C192.1,607.8 198.8,606.2 203.8,606.4C208.7,606.5 214.5,607.5 219.5,609.0C224.5,610.5 229.4,612.5 233.5,615.1C237.6,617.8 242.3,623.1 244.0,624.8"/><path d="M163.5,627.4C164.1,626.8 165.5,624.6 167.0,623.9C168.5,623.1 170.5,622.7 172.3,623.0C174.0,623.3 175.8,624.9 177.5,625.6C179.3,626.4 180.7,627.4 182.8,627.4C184.8,627.4 188.6,625.9 189.8,625.6"/><path d="M151.3,635.3C150.7,636.4 149.2,640.4 147.8,642.3C146.3,644.1 144.3,645.6 142.5,646.6C140.8,647.6 138.1,648.1 137.3,648.4"/><path d="M137.3,648.4L144.3,649.3L149.5,648.4"/><path d="M149.5,649.3C149.1,650.7 147.9,655.4 146.9,658.0C145.9,660.6 144.5,663.3 143.4,665.0C142.2,666.8 140.5,667.9 139.9,668.5"/><path d="M139.9,668.5L147.8,667.6L153.9,665.0"/><path d="M153.0,666.8C152.7,667.9 151.7,671.4 151.3,673.8C150.8,676.1 149.9,678.7 150.4,680.8C150.8,682.8 153.3,685.1 153.9,686.0"/><path d="M160.0,665.0C159.7,666.8 158.3,672.0 158.3,675.5C158.3,679.0 159.3,683.1 160.0,686.0C160.7,688.9 162.2,691.8 162.6,693.0"/><path d="M250.1,638.8C250.3,640.5 251.2,645.8 251.0,649.3C250.9,652.8 250.1,656.5 249.3,659.8C248.4,663.0 246.3,667.0 245.8,668.5"/><path d="M244.0,670.3C244.6,671.7 245.8,676.5 247.5,679.0C249.3,681.5 252.5,684.0 254.5,685.1C256.5,686.3 258.9,685.9 259.8,686.0"/><path d="M259.8,686.0L252.8,682.5L249.3,680.8"/><path d="M238.8,677.3C239.0,679.3 239.9,685.7 240.5,689.5C241.1,693.3 241.4,696.8 242.3,700.0C243.1,703.2 245.2,707.3 245.8,708.8"/><path d="M240.5,658.0C241.4,658.6 244.6,660.0 245.8,661.5C246.9,663.0 247.2,665.9 247.5,666.8"/><path d="M228.3,656.3C228.5,657.7 230.0,662.7 230.0,665.0C230.0,667.3 228.5,669.4 228.3,670.3"/><path d="M165.3,693.0C166.1,693.4 168.3,695.5 170.5,695.6C172.7,695.8 177.1,694.2 178.4,693.9"/><path d="M182.8,691.3C184.2,692.1 188.9,695.0 191.5,696.5C194.1,698.0 197.3,699.4 198.5,700.0"/><path d="M203.8,689.5C202.9,690.7 200.0,694.5 198.5,696.5C197.0,698.5 195.6,700.9 195.0,701.8"/><path d="M205.5,690.4C207.3,691.1 212.5,692.9 216.0,694.8C219.5,696.7 223.6,699.4 226.5,701.8C229.4,704.1 232.3,707.6 233.5,708.8"/><path d="M184.5,698.3C184.2,699.4 182.5,703.4 182.8,705.3C183.0,707.2 185.7,708.9 186.3,709.6"/><path d="M212.5,689.5C213.7,690.1 216.9,691.5 219.5,693.0C222.1,694.5 226.8,697.4 228.3,698.3"/><path d="M209.0,700.0C208.4,700.6 206.7,702.0 205.5,703.5C204.3,705.0 202.6,707.9 202.0,708.8"/><path d="M203.8,707.0C204.6,706.6 207.3,704.4 209.0,704.4C210.8,704.4 213.1,706.1 214.3,707.0C215.4,707.9 215.7,709.2 216.0,709.6"/><path d="M189.8,700.0C190.6,700.9 193.3,705.0 195.0,705.3C196.8,705.5 198.2,702.9 200.3,701.8C202.3,700.6 206.1,698.8 207.3,698.3"/><path d="M343.6,608.0C342.5,610.0 338.6,615.3 337.2,619.8C335.8,624.2 335.3,629.7 335.0,634.7C334.8,639.7 335.3,645.0 335.7,649.6C336.0,654.3 336.8,658.9 337.2,662.5C337.5,666.0 338.2,668.1 337.8,671.0C337.5,673.8 335.7,677.4 335.0,679.5C334.4,681.7 334.2,683.1 334.0,683.8"/><path d="M308.4,624.0C310.1,625.5 315.5,629.7 319.0,632.6C322.6,635.4 326.1,638.6 329.7,641.1C333.3,643.6 337.5,646.1 340.4,647.5C343.2,648.9 345.7,649.3 346.8,649.6"/><path d="M308.4,624.0L308.8,634.7L309.4,645.4"/><path d="M302.0,636.8C304.1,636.7 310.5,635.6 314.8,635.8C319.0,636.0 325.4,637.6 327.6,637.9"/><path d="M312.6,662.5C314.1,663.3 318.0,666.7 321.2,667.8C324.4,668.9 329.2,668.5 331.8,668.9C334.5,669.2 336.3,669.7 337.2,669.9"/><ellipse cx="323.3" cy="656.1" rx="10.7" ry="9.6"/><ellipse cx="323.3" cy="656.1" rx="7.5" ry="7.0"/><ellipse cx="323.3" cy="656.1" rx="4.7" ry="4.7"/><ellipse cx="323.3" cy="656.1" rx="1.9" ry="2.3"/><path d="M418.9,612.5C419.3,610.0 419.8,602.7 421.1,597.2C422.4,591.7 424.2,585.2 426.6,579.7C428.9,574.2 431.7,568.8 435.3,564.4C439.0,560.0 443.7,556.4 448.4,553.4C453.2,550.5 458.3,548.3 463.8,546.9C469.2,545.4 475.4,544.5 481.3,544.7C487.1,544.9 493.7,546.1 498.8,548.0C503.9,549.8 507.9,552.5 511.9,555.6C515.9,558.7 520.1,562.6 522.8,566.6C525.6,570.6 527.0,575.0 528.3,579.7C529.6,584.4 530.3,590.3 530.5,595.0C530.7,599.7 529.6,605.9 529.4,608.1"/><path d="M428.8,568.8C430.9,566.6 436.8,559.1 441.9,555.6C447.0,552.2 456.5,549.2 459.4,548.0"/><path d="M490.0,545.8C492.9,547.1 502.4,550.0 507.5,553.4C512.6,556.9 518.5,564.4 520.6,566.6"/><path d="M426.6,579.7C425.1,581.2 420.7,585.5 417.8,588.4C414.9,591.4 411.8,595.0 409.1,597.2C406.3,599.4 402.7,600.8 401.4,601.6"/><path d="M401.4,601.6L411.3,600.5L420.0,597.2"/><path d="M452.8,579.7C452.1,581.9 450.3,588.8 448.4,592.8C446.6,596.8 444.1,601.0 441.9,603.8C439.7,606.5 436.4,608.3 435.3,609.2"/><path d="M455.0,577.5C455.7,579.7 457.6,586.6 459.4,590.6C461.2,594.6 463.8,598.7 465.9,601.6C468.1,604.5 470.0,606.3 472.5,608.1C475.1,610.0 479.8,611.8 481.3,612.5"/><path d="M481.3,578.6C482.4,580.6 485.3,587.2 487.8,590.6C490.4,594.1 493.3,597.2 496.6,599.4C499.9,601.6 505.7,603.0 507.5,603.8"/><path d="M498.8,588.4C500.2,589.5 504.6,593.2 507.5,595.0C510.4,596.8 513.3,598.5 516.3,599.4C519.2,600.3 523.6,600.3 525.0,600.5"/><path d="M509.7,566.6C510.4,565.1 511.5,560.7 514.1,557.8C516.6,554.9 521.4,551.3 525.0,549.1C528.7,546.9 532.9,545.8 536.0,544.7C539.1,543.6 542.3,542.9 543.6,542.5"/><path d="M543.6,542.5C543.1,544.3 541.4,550.2 540.3,553.4C539.2,556.7 538.1,559.8 537.0,562.2C536.0,564.6 535.8,566.6 533.8,567.7C531.8,568.8 528.3,568.4 525.0,568.8C521.7,569.1 515.9,569.7 514.1,569.8"/><path d="M516.3,552.3C517.7,552.9 522.1,554.7 525.0,555.6C527.9,556.5 532.3,557.5 533.8,557.8"/><path d="M497.7,564.4C498.2,565.8 498.9,570.6 500.9,573.1C503.0,575.7 506.4,579.0 509.7,579.7C513.0,580.4 516.6,578.1 520.6,577.5C524.6,577.0 531.6,576.6 533.8,576.4"/><path d="M533.8,576.4L525.0,572.0L516.3,572.0"/><path d="M511.9,575.3C513.3,576.4 517.4,580.4 520.6,581.9C523.9,583.3 527.9,583.7 531.6,584.1C535.2,584.4 540.7,584.1 542.5,584.1"/><path d="M525.0,588.4L536.0,588.4"/><path d="M530.5,595.0C531.0,596.8 532.1,603.0 533.8,605.9C535.4,608.9 538.1,611.2 540.3,612.5C542.5,613.8 545.8,613.4 546.9,613.6"/><path d="M546.9,613.6L538.1,609.2L533.8,601.6"/><path d="M527.2,608.1C526.8,610.0 525.0,615.4 525.0,619.1C525.0,622.7 525.4,627.8 527.2,630.0C529.0,632.2 534.5,631.8 536.0,632.2"/><path d="M450.6,607.0C453.3,607.0 457.1,608.2 458.9,609.9C460.8,611.5 461.7,614.6 461.6,616.9C461.5,619.2 460.1,622.3 458.3,623.9C456.5,625.5 453.2,626.4 450.6,626.3C448.1,626.2 444.8,625.0 443.0,623.4C441.2,621.9 439.7,619.1 439.7,616.9C439.7,614.6 441.2,611.5 443.0,609.9C444.8,608.2 448.0,607.0 450.6,607.0Z"/><ellipse cx="452.8" cy="614.7" rx="1.8" ry="1.8"/><path d="M485.6,616.9C486.0,618.0 486.0,621.8 487.8,623.4C489.6,625.1 493.8,626.7 496.6,626.7C499.3,626.7 502.4,625.1 504.2,623.4C506.1,621.8 507.0,618.0 507.5,616.9"/><ellipse cx="498.8" cy="615.1" rx="1.8" ry="1.8"/><path d="M469.2,631.1C469.7,630.4 472.1,629.5 473.6,629.6C475.1,629.7 477.8,631.0 478.0,631.8C478.2,632.6 475.9,634.0 474.7,634.4C473.5,634.7 471.7,634.5 470.8,633.9C469.8,633.4 468.8,631.8 469.2,631.1Z"/><path d="M433.1,621.3C434.2,622.5 436.8,626.7 439.7,628.9C442.6,631.1 446.3,632.9 450.6,634.4C455.0,635.8 460.5,637.3 465.9,637.7C471.4,638.0 478.0,637.5 483.4,636.6C488.9,635.7 494.4,634.0 498.8,632.2C503.1,630.4 507.1,628.2 509.7,625.6C512.3,623.1 513.3,618.3 514.1,616.9"/><path d="M425.5,611.4C424.7,612.0 421.6,613.1 421.1,614.7C420.6,616.3 421.1,619.8 422.2,621.3C423.3,622.7 426.7,623.1 427.7,623.4"/><path d="M514.1,611.4C515.2,611.2 518.8,609.8 520.6,610.3C522.5,610.9 524.6,612.5 525.0,614.7C525.4,616.9 524.3,621.6 522.8,623.4C521.4,625.3 517.4,625.3 516.3,625.6"/><path d="M411.3,626.7C412.7,627.6 417.1,631.7 420.0,632.2C422.9,632.7 425.8,630.7 428.8,630.0C431.7,629.3 436.0,628.2 437.5,627.8"/><path d="M411.3,626.7C413.1,626.5 418.7,626.0 422.2,625.6C425.7,625.3 430.4,624.7 432.0,624.5"/><path d="M511.9,627.8C512.6,629.3 514.8,634.0 516.3,636.6C517.7,639.1 519.2,642.8 520.6,643.1C522.1,643.5 525.0,640.9 525.0,638.8C525.0,636.6 521.4,631.5 520.6,630.0"/><path d="M527.2,630.0C528.3,630.7 532.3,632.9 533.8,634.4C535.2,635.8 535.6,638.0 536.0,638.8"/><path d="M397.0,654.7C398.7,654.3 402.7,653.2 406.9,652.5C411.1,651.8 417.5,651.8 422.2,650.3C426.9,648.9 431.7,645.9 435.3,643.8C439.0,641.6 442.6,638.3 444.1,637.2"/><path d="M397.0,654.7C398.3,655.4 402.0,657.6 404.7,659.1C407.4,660.5 410.9,662.3 413.4,663.4C416.0,664.5 418.9,665.3 420.0,665.6"/><path d="M420.0,665.6L411.3,666.7L403.6,668.3"/><path d="M403.6,668.3C405.2,669.3 410.0,673.0 413.4,674.4C416.9,675.8 420.2,676.2 424.4,676.6C428.6,676.9 436.2,676.6 438.6,676.6"/><path d="M438.6,676.6L433.1,680.9L428.8,688.6"/><path d="M428.8,688.6C430.2,688.6 434.6,689.1 437.5,688.6C440.4,688.1 444.1,686.6 446.3,685.3C448.4,684.0 449.9,681.7 450.6,680.9"/><path d="M455.0,641.6C453.9,643.0 450.1,647.8 448.4,650.3C446.8,652.9 444.8,654.7 445.2,656.9C445.5,659.1 449.0,662.0 450.6,663.4C452.3,664.9 454.3,665.3 455.0,665.6"/><path d="M455.0,665.6C454.3,666.7 451.7,669.6 450.6,672.2C449.5,674.7 448.8,679.5 448.4,680.9"/><path d="M461.6,641.6C461.2,643.8 459.9,650.7 459.4,654.7C458.8,658.7 458.5,663.8 458.3,665.6"/><path d="M490.0,643.8C490.4,645.6 491.7,651.0 492.2,654.7C492.7,658.3 493.1,663.8 493.3,665.6"/><path d="M465.9,648.1C466.7,646.3 470.0,644.1 472.5,643.8C475.1,643.4 479.4,644.5 481.3,645.9C483.1,647.4 484.2,650.7 483.4,652.5C482.7,654.3 479.4,656.5 476.9,656.9C474.3,657.2 470.0,656.2 468.1,654.7C466.3,653.2 465.2,650.0 465.9,648.1Z"/><path d="M468.1,650.3C470.0,651.4 475.8,656.2 479.1,656.9C482.4,657.6 486.4,655.1 487.8,654.7"/><path d="M458.3,663.4C460.7,663.8 467.6,665.6 472.5,665.6C477.4,665.6 484.4,664.0 487.8,663.4C491.3,662.9 492.4,662.5 493.3,662.3"/><path d="M457.2,667.8C459.7,668.2 466.7,670.0 472.5,670.0C478.3,670.0 488.9,668.2 492.2,667.8"/><path d="M450.6,674.4L449.5,683.1L468.1,685.3L469.2,674.4"/><path d="M455.0,685.3C454.6,687.1 453.5,692.6 452.8,696.3C452.1,699.9 451.0,705.4 450.6,707.2"/><path d="M467.0,685.3C466.5,687.1 464.9,692.6 463.8,696.3C462.7,699.9 461.2,704.6 460.5,707.2C459.7,709.7 459.6,710.8 459.4,711.6"/><path d="M440.8,708.3L450.6,709.4L459.4,712.7"/><path d="M472.5,685.3C472.3,687.1 471.4,692.6 471.4,696.3C471.4,699.9 472.0,704.3 472.5,707.2C473.1,710.1 474.3,712.7 474.7,713.8"/><path d="M474.7,713.8L483.4,715.9L493.3,712.7"/><path d="M481.3,674.4L483.4,683.1L490.0,682.0L492.2,672.2"/><path d="M493.3,643.8C494.2,645.9 497.1,652.5 498.8,656.9C500.4,661.3 501.7,666.0 503.1,670.0C504.6,674.0 506.1,678.8 507.5,680.9C509.0,683.1 511.2,682.8 511.9,683.1"/><path d="M507.5,680.9C507.1,682.4 506.6,686.8 505.3,689.7C504.0,692.6 500.8,697.0 499.9,698.4"/><path d="M499.9,698.4L498.8,691.9L497.7,687.5L494.4,691.9L487.8,698.4"/><path d="M500.9,650.3C502.4,652.5 506.8,659.4 509.7,663.4C512.6,667.5 515.5,671.3 518.5,674.4C521.4,677.5 525.7,680.8 527.2,682.0"/><path d="M527.2,682.0L516.3,680.9L509.7,676.6"/><path d="M494.4,632.8C495.8,633.9 500.2,637.9 503.1,639.4C506.1,640.8 509.0,640.8 511.9,641.6C514.8,642.3 518.5,644.1 520.6,643.8C522.8,643.4 524.3,640.1 525.0,639.4"/><path d="M438.0,341.2C439.8,339.4 445.0,333.1 449.0,330.2C453.0,327.3 460.0,324.7 462.2,323.6"/><path d="M510.6,361.0C510.9,362.8 512.2,368.3 512.8,372.0C513.3,375.6 514.2,379.3 513.9,383.0C513.5,386.6 511.1,392.1 510.6,394.0"/><ellipse cx="519.8" cy="347.8" rx="2.2" ry="1.5"/></g>
<g fill="none" stroke="#1e1e1e" stroke-width="1.38" stroke-linecap="round" stroke-linejoin="round"><path d="M368.4,208.2C368.9,206.3 369.9,200.5 371.3,196.6C372.8,192.7 374.6,188.3 377.2,184.9C379.8,181.5 383.3,178.3 386.9,176.2C390.4,174.1 394.3,173.3 398.5,172.3C402.7,171.3 407.9,170.5 412.1,170.4C416.3,170.2 419.9,170.2 423.7,171.3C427.6,172.5 432.2,174.9 435.4,177.2C438.6,179.4 441.0,182.0 443.1,184.9C445.3,187.8 446.7,191.1 448.0,194.6C449.3,198.2 450.4,204.3 450.9,206.3"/><path d="M291.9,330.2C293.2,329.8 296.8,328.2 299.6,328.0C302.3,327.8 305.8,328.3 308.4,329.1C310.9,329.8 313.9,331.8 315.0,332.4"/><path d="M334.8,330.2C336.2,329.6 340.3,327.4 343.6,326.9C346.9,326.3 351.3,326.5 354.6,326.9C357.9,327.2 361.9,328.7 363.4,329.1"/><path d="M335.0,439.0C336.4,439.7 340.9,441.7 343.3,443.1C345.7,444.5 348.1,445.5 349.5,447.3C350.9,449.0 351.2,452.4 351.6,453.5"/><path d="M347.4,446.2C347.2,447.4 346.7,451.2 346.4,453.5C346.0,455.7 345.5,458.6 345.3,459.7"/><path d="M142.5,539.5C143.1,537.8 144.3,532.5 146.0,529.0C147.8,525.5 150.1,521.7 153.0,518.5C155.9,515.3 159.7,511.9 163.5,509.8C167.3,507.6 171.4,506.5 175.8,505.4C180.1,504.2 185.1,503.0 189.8,502.8C194.4,502.5 199.4,502.8 203.8,503.6C208.1,504.5 212.5,506.1 216.0,508.0C219.5,509.9 222.1,512.4 224.8,515.0C227.4,517.6 229.9,520.5 231.8,523.8C233.7,527.0 235.0,530.8 236.1,534.3C237.3,537.8 237.9,541.5 238.8,544.8C239.6,548.0 240.1,550.6 241.4,553.5C242.7,556.4 245.8,560.8 246.6,562.3"/><path d="M201.1,657.1C202.4,656.7 205.9,655.2 209.0,654.5C212.1,653.8 216.0,652.9 219.5,652.8C223.0,652.6 227.2,653.2 230.0,653.6C232.8,654.1 235.1,655.1 236.1,655.4"/><path d="M488.6,328.0C488.8,327.3 487.5,324.7 489.7,323.6C491.9,322.5 497.6,320.8 501.8,321.4C506.0,321.9 510.9,324.3 515.0,326.9C519.0,329.5 523.0,332.9 526.0,336.8C528.9,340.6 530.7,345.2 532.6,350.0C534.4,354.7 535.5,360.6 537.0,365.4C538.4,370.1 539.7,375.3 541.4,378.6C543.0,381.9 545.9,384.1 546.9,385.2"/></g>
<g fill="none" stroke="#1e1e1e" stroke-width="1.61" stroke-linecap="round" stroke-linejoin="round"><path d="M389.8,222.8C391.2,222.4 395.4,221.0 398.5,220.8C401.6,220.7 406.0,221.3 408.2,221.8C410.5,222.3 411.5,223.4 412.1,223.7"/><path d="M426.7,217.9C427.8,217.3 431.0,215.0 433.4,214.0C435.9,213.1 439.1,212.3 441.2,212.1C443.3,211.9 445.3,212.9 446.1,213.1"/><path d="M443.5,375.3C444.8,374.9 448.4,373.3 451.2,373.1C453.9,372.9 457.4,373.3 460.0,374.2C462.5,375.1 465.5,377.8 466.6,378.6"/><path d="M486.4,384.1C487.5,383.5 490.4,381.3 493.0,380.8C495.5,380.2 499.0,380.2 501.8,380.8C504.5,381.3 508.2,383.5 509.5,384.1"/></g>
<g fill="none" stroke="#404040" stroke-width="1.15" stroke-linecap="round" stroke-linejoin="round"><ellipse cx="407.2" cy="228.6" rx="2.1" ry="3.3"/><ellipse cx="440.2" cy="222.8" rx="2.1" ry="2.7"/><path d="M306.2,647.5C308.0,647.0 313.0,644.7 316.9,644.3C320.8,644.0 325.8,644.5 329.7,645.4C333.6,646.3 338.6,648.9 340.4,649.6"/></g>
<g fill="none" stroke="#1e1e1e" stroke-width="1.26" stroke-linecap="round" stroke-linejoin="round"><path d="M442.4,177.6C442.8,175.9 443.1,170.7 444.5,167.3C445.9,163.8 447.9,159.8 450.7,156.9C453.5,154.0 457.3,151.7 461.0,149.7C464.8,147.6 469.3,145.7 473.5,144.5C477.6,143.3 481.7,142.4 485.9,142.4C490.0,142.4 494.2,143.1 498.3,144.5C502.4,145.9 507.3,148.3 510.7,150.7C514.2,153.1 516.6,155.5 519.0,159.0C521.4,162.4 523.5,167.3 525.2,171.4C526.9,175.5 528.0,180.4 529.4,183.8C530.7,187.3 531.9,189.9 533.5,192.1C535.1,194.3 537.8,196.4 538.7,197.3"/><path d="M276.5,312.6C277.0,310.4 278.1,303.6 279.8,299.4C281.4,295.2 283.5,290.9 286.4,287.3C289.3,283.6 293.4,280.0 297.4,277.4C301.4,274.8 305.8,273.2 310.6,271.9C315.3,270.6 320.8,269.9 326.0,269.7C331.1,269.5 336.2,269.7 341.4,270.8C346.5,271.9 352.0,273.7 356.8,276.3C361.5,278.9 366.3,282.7 370.0,286.2C373.6,289.7 376.6,293.1 378.8,297.2C381.0,301.2 381.9,306.3 383.2,310.4C384.4,314.4 385.2,317.9 386.5,321.4C387.7,324.9 390.1,329.6 390.9,331.3"/><path d="M149.0,388.3C149.3,386.2 149.7,380.0 151.0,375.9C152.4,371.7 154.5,367.3 157.3,363.5C160.0,359.7 163.8,355.9 167.6,353.1C171.4,350.4 175.5,348.3 180.0,346.9C184.5,345.5 189.7,345.4 194.5,344.8C199.3,344.3 204.2,343.5 209.0,343.8C213.8,344.1 219.0,345.2 223.5,346.9C228.0,348.6 232.1,351.0 235.9,354.2C239.7,357.3 243.5,361.6 246.3,365.5C249.0,369.5 250.8,373.8 252.5,378.0C254.2,382.1 255.2,386.9 256.6,390.4C258.0,393.8 258.3,395.4 260.8,398.7C263.2,401.9 269.4,408.1 271.1,410.0"/></g>
<g fill="none" stroke="#1e1e1e" stroke-width="1.03" stroke-linecap="round" stroke-linejoin="round"><path d="M318.3,365.4C318.4,367.2 318.7,373.8 318.9,376.4C319.2,378.9 319.7,380.0 319.8,380.8"/><path d="M434.2,609.2C434.4,610.5 435.0,614.5 435.3,616.9C435.7,619.3 436.2,622.4 436.4,623.4"/><path d="M494.4,639.4C494.7,640.1 496.4,642.5 496.6,643.8C496.8,645.0 495.7,646.5 495.5,647.0"/></g>
<g fill="none" stroke="#d9f5ec" stroke-width="0.69" stroke-linecap="round" stroke-linejoin="round"><path d="M272.1,365.4L273.2,372.0"/><path d="M383.2,358.8C383.7,358.0 385.4,355.5 386.5,354.4C387.6,353.3 389.2,352.5 389.8,352.2"/><path d="M385.4,369.8C385.7,369.0 386.6,366.5 387.6,365.4C388.5,364.3 390.3,363.5 390.9,363.2"/><path d="M273.2,364.5L274.2,373.8"/></g>
<g fill="none" stroke="#d9f5ec" stroke-width="0.57" stroke-linecap="round" stroke-linejoin="round"><path d="M272.3,368.9L275.2,368.4"/></g>
<g fill="none" stroke="#1e1e1e" stroke-width="2.07" stroke-linecap="round" stroke-linejoin="round"><path d="M157.4,555.6C158.4,556.0 161.2,557.5 163.5,558.2C165.8,558.9 169.0,559.7 171.4,559.8C173.7,559.9 176.5,558.9 177.5,558.8"/><path d="M196.8,557.4C197.9,557.6 201.4,559.0 203.8,558.9C206.1,558.9 208.7,557.9 210.8,557.2C212.8,556.4 215.1,555.0 216.0,554.6"/></g>
<g fill="none" stroke="#7a7a7a" stroke-width="1.03" stroke-linecap="round" stroke-linejoin="round"><path d="M208.7,497.5L218.6,496.6L216.0,518.5L207.3,519.4L208.7,497.5"/><path d="M432.0,608.1C433.3,607.8 436.6,606.3 439.7,605.9C442.8,605.6 447.3,605.4 450.6,605.9C453.9,606.5 457.9,608.7 459.4,609.2"/><path d="M479.1,612.5C480.5,612.0 484.5,610.0 487.8,609.2C491.1,608.5 495.5,608.1 498.8,608.1C502.0,608.1 506.1,609.0 507.5,609.2"/><path d="M489.7,344.5C489.5,343.2 491.7,341.2 493.0,341.2C494.3,341.2 495.9,343.4 497.4,344.5C498.8,345.6 500.3,347.8 501.8,347.8C503.2,347.8 504.7,344.8 506.2,344.5C507.6,344.1 509.3,344.8 510.6,345.6C511.8,346.3 513.9,348.0 513.9,348.9C513.9,349.8 512.0,350.9 510.6,351.1C509.1,351.3 506.9,350.0 505.1,350.0C503.2,350.0 501.4,351.3 499.6,351.1C497.7,350.9 495.7,350.0 494.1,348.9C492.4,347.8 489.9,345.8 489.7,344.5Z"/></g>
<g fill="none" stroke="#7a7a7a" stroke-width="0.69" stroke-linecap="round" stroke-linejoin="round"><path d="M282.7,605.9C282.9,612.5 283.6,631.7 283.8,645.4C284.0,659.1 283.7,679.0 283.8,688.1C283.9,697.1 284.3,697.9 284.5,699.8"/><path d="M282.7,605.9C288.8,605.7 307.7,604.6 319.0,604.8C330.4,605.1 340.9,606.5 351.1,607.4C361.2,608.3 375.1,609.7 379.9,610.2"/><path d="M379.9,610.2C380.0,616.0 380.5,633.8 380.5,645.4C380.5,656.9 380.1,670.3 379.9,679.5C379.7,688.8 379.3,697.3 379.2,700.9"/><path d="M284.5,699.8C290.2,699.6 307.9,698.7 319.0,698.7C330.1,698.7 341.0,699.5 351.1,699.8C361.1,700.2 374.5,700.7 379.2,700.9"/></g>
<g fill="none" stroke="#aaaaaa" stroke-width="0.92" stroke-linecap="round" stroke-linejoin="round"><ellipse cx="429.8" cy="636.6" rx="4.8" ry="7.2" transform="rotate(30 429.8 636.6)"/></g>
<g fill="none" stroke="#6fd0b3" stroke-width="1.84" stroke-linecap="round" stroke-linejoin="round"><path d="M515.6,360.1L516.7,362.3"/></g>
<g fill="none" stroke="#2f7a66" stroke-width="1.15" stroke-linecap="round" stroke-linejoin="round"><path d="M430.3,315.2L434.7,324.7"/><path d="M417.1,328.4L424.8,332.4"/><path d="M414.2,342.3L420.4,344.5"/></g>
<g font-family="Liberation Sans, Noto Sans CJK JP, sans-serif" font-weight="bold" fill="#7fd9bc" stroke="#7fd9bc" stroke-width="1.4" stroke-linejoin="round"><text x="298.4 322.2 345.6" y="147.9" font-size="16" transform="rotate(-1.5 330 143)">いてぬ</text><text x="301.5 318 348" y="167" font-size="18" transform="rotate(-2 336 161)">シール</text></g>
<text x="357.6" y="616.6" font-family="Liberation Sans, Noto Sans CJK JP, sans-serif" font-size="8.6" fill="#4a4a4a" letter-spacing="0.55" style="writing-mode:vertical-rl;text-orientation:upright">失敗は許されない</text>
</g>
  <!-- top bar -->
  <rect x="0" y="0" width="800" height="39.8" fill="#1d1d1d"/>
  <g fill="#161616">
    <circle cx="155.5" cy="15.8" r="17"/>
    <circle cx="218.5" cy="15.8" r="17"/>
    <circle cx="281.5" cy="15.8" r="17"/>
    <circle cx="344.5" cy="15.8" r="17"/>
  </g>
  <!-- wrench -->
  <g>
    <path d="M147.6,23.6 L157.4,13.8" stroke="#a3a3a3" stroke-width="3.5" stroke-linecap="round" fill="none"/>
    <circle cx="159.2" cy="13" r="6.3" fill="#a3a3a3"/>
    <path d="M160.2,12 L166.6,5.6" stroke="#161616" stroke-width="5" stroke-linecap="round" fill="none"/>
  </g>
  <!-- magic wand -->
  <g stroke="#a3a3a3" fill="none" stroke-linecap="round">
    <path d="M214,23.2 L223.6,13.3" stroke-width="3.6"/>
    <path d="M219.3,15.5 L221.6,17.6" stroke="#161616" stroke-width="0.9"/>
  </g>
  <g fill="#a3a3a3">
    <path d="M214.2,7.2 Q214.6,11.2 218.2,11.7 Q214.6,12.2 214.2,16.2 Q213.8,12.2 210.2,11.7 Q213.8,11.2 214.2,7.2Z"/>
    <path d="M220.3,6.6 Q220.5,8.9 222.6,9.1 Q220.5,9.3 220.3,11.6 Q220.1,9.3 218,9.1 Q220.1,8.9 220.3,6.6Z"/>
  </g>
  <!-- selection S -->
  <g stroke="#a3a3a3" fill="none" stroke-linecap="round" stroke-width="3">
    <path d="M281,9.6 L288.2,9.6"/>
    <path d="M279.4,13.6 L282.6,19"/>
    <path d="M274.2,23.2 L282,23.2"/>
  </g>
  <!-- arrow -->
  <g fill="#a3a3a3" stroke="#a3a3a3" stroke-linejoin="round">
    <path d="M352.4,8.2 L346.2,22.4 L343.8,16.6 L338,14.6 Z" stroke-width="0.8"/>
    <path d="M336.8,23.6 L345,15.4" stroke-width="2.6" stroke-linecap="round" fill="none"/>
  </g>
  <!-- three dots -->
  <g fill="#565656">
    <circle cx="427.8" cy="5.4" r="2.7"/>
    <circle cx="436.6" cy="5.4" r="2.7"/>
    <circle cx="445.3" cy="5.4" r="2.7"/>
  </g>
  <!-- brush -->
  <g fill="#3b73e6">
    <path d="M535.1,20 Q543.6,8 553.2,2.3 Q554.9,1.6 554.3,3.4 Q549.6,12.6 536.8,21.8 Z"/>
    <path d="M533.9,21.4 Q528.4,21 526.4,24.4 Q525.2,27.8 522.8,29.6 Q528.2,30.9 531.8,28.7 Q535.4,26.2 535.2,22.6 Z"/>
  </g>
  <!-- smudge -->
  <g fill="#c6c6c6" stroke="#c6c6c6" stroke-linejoin="round" stroke-width="1.2">
    <path d="M621.4,3.4 L626.8,9.6 L624.2,12 Q625.4,17 620.6,20.4 L616.6,24.6 L613.6,24.6 L620,17.6 L608.6,27.6 Q604.6,30.4 602,27.4 Q600.4,24.8 603.4,22.2 L606,18.8 Q604.2,12.6 609.8,10.4 L618,7 Z"/>
  </g>
  <path d="M613.4,25.4 L620.6,18" stroke="#1d1d1d" stroke-width="1.3" fill="none" stroke-linecap="round"/>
  <!-- eraser -->
  <g>
    <path d="M695.4,4.6 Q697.6,3 699.4,4.8 L704.6,10 Q705.8,11.6 704.4,13 L688.4,27.4 Q686.6,28.8 684,28.4 L679.6,27.4 Q677,26.6 676.4,23.6 Q676.2,22 677.8,20.4 Z" fill="#c6c6c6"/>
    <path d="M680.6,17.2 L690.8,26" stroke="#1d1d1d" stroke-width="1.5" fill="none"/>
  </g>
  <!-- layers -->
  <g>
    <rect x="760.8" y="3.4" width="19" height="19" rx="3.6" fill="#c6c6c6"/>
    <rect x="752.9" y="8.9" width="21.2" height="21.2" rx="4.4" fill="#1d1d1d"/>
    <rect x="754" y="10" width="19" height="19" rx="3.6" fill="#c6c6c6"/>
  </g>
  <!-- left black strip -->
  <rect x="0" y="0" width="4" height="773" fill="#000"/>
  <rect x="0" y="415.3" width="1.2" height="45.4" fill="#d8d8d8"/>
  <!-- sidebar -->
  <path d="M4,202.3 H45.2 Q49.2,202.3 49.2,206.3 V760.8 Q49.2,764.8 45.2,764.8 H4 Z" fill="#1b1b1b"/>
  <rect x="8.6" y="205.6" width="37.2" height="185.2" rx="3.6" fill="#262626"/>
  <rect x="8.6" y="478" width="37.2" height="187" rx="3.6" fill="#262626"/>
  <rect x="8.8" y="256.6" width="36.8" height="18.5" rx="4" fill="#b1b1b1"/>
  <rect x="8.8" y="480.6" width="36.8" height="18.5" rx="4" fill="#b1b1b1"/>
  <rect x="18" y="425.2" width="18.4" height="18.4" rx="4.6" fill="none" stroke="#b1b1b1" stroke-width="1.9"/>
  <!-- undo / redo -->
  <g stroke="#393939" fill="none" stroke-width="1.7" stroke-linecap="round" stroke-linejoin="round">
    <path d="M20,698.4 H31.6 Q36.2,697.8 36.2,693 Q36.2,688.4 31.6,688.4 H24"/>
    <path d="M34.4,744.2 H22.8 Q18.2,743.6 18.2,738.8 Q18.2,734.2 22.8,734.2 H31"/>
  </g>
  <g fill="#393939">
    <path d="M18,688.4 L25.4,684 V692.8 Z"/>
    <path d="M36.6,734.2 L29.2,729.8 V738.6 Z"/>
  </g>
</svg>
<div id="gallery">ギャラリー</div>
</body>
</html>
